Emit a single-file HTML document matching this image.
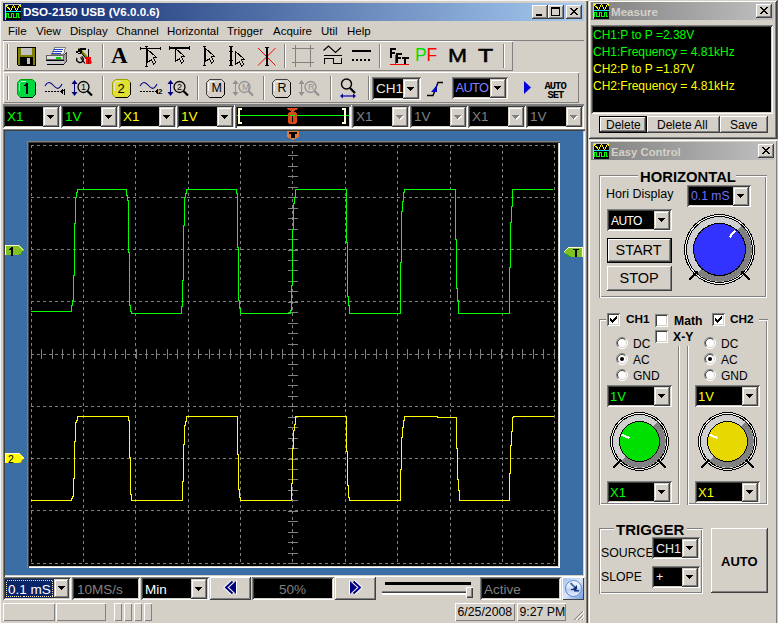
<!DOCTYPE html>
<html><head><meta charset="utf-8">
<style>
*{box-sizing:border-box}
html,body{margin:0;padding:0}
body{width:778px;height:623px;background:#D4D0C8;position:relative;overflow:hidden;font-family:"Liberation Sans",sans-serif;font-size:12px;color:#000}
.a{position:absolute}
.t{position:absolute;white-space:nowrap;line-height:1}
svg{display:block;overflow:visible}
</style></head><body>

<div class="a" style="left:0px;top:0px;width:588px;height:660px;background:#D4D0C8;box-shadow:inset 1px 1px #F4F4F4,inset -1px -1px #404040,inset -2px -2px #808080"></div>
<div class="a" style="left:3px;top:3px;width:581px;height:18px;background:linear-gradient(to right,#0A246A,#A6CAF0)"></div>
<svg class="a" style="left:5px;top:4px;" width="16" height="16" viewBox="0 0 16 16" shape-rendering="crispEdges"><rect x="0" y="0" width="16" height="16" fill="#000"/><rect x="0" y="0" width="16" height="1" fill="#C8C8C8"/><rect x="0" y="0" width="1" height="16" fill="#C8C8C8"/><rect x="1" y="1" width="1" height="2" fill="#FFFF00"/><rect x="2" y="1" width="1" height="1" fill="#FFFF00"/><rect x="2" y="3" width="1" height="1" fill="#FFFF00"/><rect x="3" y="4" width="1" height="1" fill="#FFFF00"/><rect x="3" y="3" width="1" height="1" fill="#FFFF00"/><rect x="4" y="5" width="1" height="1" fill="#FFFF00"/><rect x="4" y="4" width="1" height="1" fill="#FFFF00"/><rect x="5" y="6" width="1" height="1" fill="#FFFF00"/><rect x="6" y="5" width="1" height="1" fill="#FFFF00"/><rect x="6" y="4" width="1" height="1" fill="#FFFF00"/><rect x="7" y="3" width="1" height="1" fill="#FFFF00"/><rect x="7" y="2" width="1" height="1" fill="#FFFF00"/><rect x="8" y="1" width="1" height="1" fill="#FFFF00"/><rect x="9" y="2" width="1" height="1" fill="#FFFF00"/><rect x="9" y="3" width="1" height="1" fill="#FFFF00"/><rect x="10" y="4" width="1" height="1" fill="#FFFF00"/><rect x="10" y="5" width="1" height="1" fill="#FFFF00"/><rect x="11" y="6" width="1" height="1" fill="#FFFF00"/><rect x="12" y="5" width="1" height="1" fill="#FFFF00"/><rect x="12" y="4" width="1" height="1" fill="#FFFF00"/><rect x="13" y="3" width="1" height="1" fill="#FFFF00"/><rect x="13" y="2" width="1" height="1" fill="#FFFF00"/><rect x="14" y="1" width="1" height="1" fill="#FFFF00"/><rect x="15" y="1" width="1" height="2" fill="#FFFF00"/><rect x="1" y="7" width="15" height="1" fill="#00E8FF"/><rect x="1" y="9" width="1" height="5" fill="#00FF00"/><rect x="1" y="9" width="2" height="1" fill="#00FF00"/><rect x="3" y="9" width="1" height="5" fill="#00FF00"/><rect x="3" y="13" width="3" height="1" fill="#00FF00"/><rect x="6" y="9" width="1" height="5" fill="#00FF00"/><rect x="6" y="9" width="3" height="1" fill="#00FF00"/><rect x="8" y="9" width="1" height="5" fill="#00FF00"/><rect x="8" y="13" width="3" height="1" fill="#00FF00"/><rect x="11" y="9" width="1" height="5" fill="#00FF00"/><rect x="11" y="9" width="3" height="1" fill="#00FF00"/><rect x="13" y="9" width="1" height="5" fill="#00FF00"/><rect x="13" y="13" width="2" height="1" fill="#00FF00"/></svg>
<div class="t" style="left:23px;top:6px;font-size:11.6px;color:#fff;font-weight:bold;">DSO-2150 USB (V6.0.0.6)</div>
<div class="a" style="left:532px;top:5px;width:16px;height:14px;box-shadow:inset -1px -1px #404040,inset 1px 1px #FFFFFF,inset -2px -2px #808080,inset 2px 2px #D4D0C8;background:#D4D0C8"></div>
<div class="a" style="left:548px;top:5px;width:16px;height:14px;box-shadow:inset -1px -1px #404040,inset 1px 1px #FFFFFF,inset -2px -2px #808080,inset 2px 2px #D4D0C8;background:#D4D0C8"></div>
<div class="a" style="left:566px;top:5px;width:16px;height:14px;box-shadow:inset -1px -1px #404040,inset 1px 1px #FFFFFF,inset -2px -2px #808080,inset 2px 2px #D4D0C8;background:#D4D0C8"></div>
<svg class="a" style="left:532px;top:5px;" width="16" height="14" viewBox="0 0 16 14" shape-rendering="crispEdges"><rect x="4" y="9" width="6" height="2" fill="#000"/></svg>
<svg class="a" style="left:548px;top:5px;" width="16" height="14" viewBox="0 0 16 14" shape-rendering="crispEdges"><rect x="3" y="2" width="9" height="2" fill="#000"/><rect x="3" y="2" width="1" height="9" fill="#000"/><rect x="11" y="2" width="1" height="9" fill="#000"/><rect x="3" y="10" width="9" height="1" fill="#000"/></svg>
<svg class="a" style="left:566px;top:5px;" width="16" height="14" viewBox="0 0 16 14" shape-rendering="crispEdges"><rect x="4" y="3" width="2" height="1" fill="#000"/><rect x="10" y="3" width="2" height="1" fill="#000"/><rect x="5" y="4" width="2" height="1" fill="#000"/><rect x="9" y="4" width="2" height="1" fill="#000"/><rect x="6" y="5" width="4" height="1" fill="#000"/><rect x="7" y="6" width="2" height="1" fill="#000"/><rect x="6" y="7" width="4" height="1" fill="#000"/><rect x="5" y="8" width="2" height="1" fill="#000"/><rect x="9" y="8" width="2" height="1" fill="#000"/><rect x="4" y="9" width="2" height="1" fill="#000"/><rect x="10" y="9" width="2" height="1" fill="#000"/></svg>
<div class="t" style="left:8px;top:26px;font-size:11.5px;color:#000;">File</div>
<div class="t" style="left:36px;top:26px;font-size:11.5px;color:#000;">View</div>
<div class="t" style="left:70px;top:26px;font-size:11.5px;color:#000;">Display</div>
<div class="t" style="left:116px;top:26px;font-size:11.5px;color:#000;">Channel</div>
<div class="t" style="left:167px;top:26px;font-size:11.5px;color:#000;">Horizontal</div>
<div class="t" style="left:227px;top:26px;font-size:11.5px;color:#000;">Trigger</div>
<div class="t" style="left:273px;top:26px;font-size:11.5px;color:#000;">Acquire</div>
<div class="t" style="left:321px;top:26px;font-size:11.5px;color:#000;">Util</div>
<div class="t" style="left:347px;top:26px;font-size:11.5px;color:#000;">Help</div>
<div class="a" style="left:3px;top:40px;width:581px;height:1px;background:#808080"></div>
<div class="a" style="left:3px;top:41px;width:510px;height:30px;box-shadow:inset 1px 1px #FFFFFF,inset -1px -1px #808080"></div>
<div class="a" style="left:3px;top:72px;width:576px;height:31px;box-shadow:inset 1px 1px #FFFFFF,inset -1px -1px #808080"></div>
<div class="a" style="left:7px;top:44px;width:2px;height:24px;box-shadow:inset 1px 0 #808080,inset -1px 0 #fff"></div>
<div class="a" style="left:7px;top:76px;width:2px;height:24px;box-shadow:inset 1px 0 #808080,inset -1px 0 #fff"></div>
<div class="a" style="left:102px;top:44px;width:2px;height:24px;box-shadow:inset 1px 0 #808080,inset -1px 0 #fff"></div>
<div class="a" style="left:284px;top:44px;width:2px;height:24px;box-shadow:inset 1px 0 #808080,inset -1px 0 #fff"></div>
<div class="a" style="left:379px;top:44px;width:2px;height:24px;box-shadow:inset 1px 0 #808080,inset -1px 0 #fff"></div>
<div class="a" style="left:503px;top:44px;width:2px;height:24px;box-shadow:inset 1px 0 #808080,inset -1px 0 #fff"></div>
<div class="a" style="left:102px;top:76px;width:2px;height:24px;box-shadow:inset 1px 0 #808080,inset -1px 0 #fff"></div>
<div class="a" style="left:197px;top:76px;width:2px;height:24px;box-shadow:inset 1px 0 #808080,inset -1px 0 #fff"></div>
<div class="a" style="left:263px;top:76px;width:2px;height:24px;box-shadow:inset 1px 0 #808080,inset -1px 0 #fff"></div>
<div class="a" style="left:330px;top:76px;width:2px;height:24px;box-shadow:inset 1px 0 #808080,inset -1px 0 #fff"></div>
<div class="a" style="left:368px;top:76px;width:2px;height:24px;box-shadow:inset 1px 0 #808080,inset -1px 0 #fff"></div>
<svg class="a" style="left:0px;top:0px;" width="1" height="1" viewBox="0 0 1 1" shape-rendering="crispEdges"><rect x="17" y="47" width="19" height="19" fill="#000"/><rect x="18" y="48" width="17" height="17" fill="#808000"/><rect x="21" y="48" width="11" height="7" fill="#C0C0C0"/><rect x="20" y="55" width="13" height="1" fill="#808000"/><rect x="20" y="57" width="13" height="8" fill="#000"/><rect x="27" y="58" width="3" height="6" fill="#C0C0C0"/><rect x="17" y="65" width="1" height="1" fill="#D4D0C8"/></svg>
<svg class="a" style="left:0px;top:0px;" width="1" height="1" viewBox="0 0 1 1" shape-rendering="crispEdges"><path d="M51.5 54.5 L54.5 47.5 L65.5 47.5 L63.5 54.5 Z" fill="#F0F0F0" stroke="#808080"/><rect x="54" y="49" width="9" height="1" fill="#2040D0"/><rect x="53" y="51" width="9" height="1" fill="#2040D0"/><rect x="52" y="53" width="9" height="1" fill="#2040D0"/><rect x="46.5" y="55.5" width="17" height="4" fill="#E0E0E0" stroke="#606060"/><rect x="46" y="60" width="18" height="1" fill="#000"/><rect x="47" y="61" width="17" height="3" fill="#C8C8C8"/><rect x="47" y="64" width="17" height="1" fill="#000"/><rect x="56" y="57" width="5" height="2" fill="#00D000"/><path d="M63.5 55.5 L66.5 52.5 L66.5 61.5 L63.5 64.5" fill="#A0A0A0" stroke="#404040"/></svg>
<svg class="a" style="left:0px;top:0px;" width="1" height="1" viewBox="0 0 1 1" shape-rendering="crispEdges"><path d="M79 48.5 L91.5 63" stroke="#808000" stroke-width="2.4" fill="none" shape-rendering="auto"/><path d="M81.5 53 L90 63.5" stroke="#000" stroke-width="1" fill="none" shape-rendering="auto"/><rect x="80" y="48" width="6" height="2" fill="#000"/><rect x="78" y="49" width="4" height="2" fill="#000"/><rect x="76" y="51" width="5" height="1" fill="#000"/><rect x="76" y="52" width="2" height="1" fill="#000"/><rect x="78" y="53" width="3" height="1" fill="#000"/><rect x="80" y="51" width="2" height="2" fill="#000"/><rect x="78" y="48" width="2" height="1" fill="#808000"/><path d="M77 58 A3.2 3.2 0 1 0 81.5 56.5" stroke="#000" stroke-width="1.3" fill="none" shape-rendering="auto"/><path d="M80.5 57.5 L85 63.5" stroke="#000" stroke-width="1.2" fill="none" shape-rendering="auto"/><rect x="88" y="49" width="1" height="8" fill="#000"/><rect x="86" y="57" width="5" height="7" fill="#FF0000"/><rect x="88" y="59" width="1" height="5" fill="#A00000"/></svg>
<div class="t" style="left:111px;top:44px;font-size:23px;color:#000;font-weight:bold;font-family:'Liberation Serif',serif">A</div>
<svg class="a" style="left:0px;top:0px;" width="1" height="1" viewBox="0 0 1 1" shape-rendering="crispEdges"><rect x="140" y="48" width="21" height="1" fill="#000"/><rect x="140" y="47" width="1" height="3" fill="#000"/><rect x="160" y="47" width="1" height="3" fill="#000"/><rect x="146" y="46" width="1" height="21" fill="#000"/><rect x="145" y="46" width="3" height="1" fill="#000"/><rect x="145" y="66" width="3" height="1" fill="#000"/><path d="M147.5 49.5 L156.5 57.5 L153.5 57.5 L155.5 62.5 L153.5 64 L151.5 60 L147.5 62 Z" fill="#D4D0C8" stroke="#000" stroke-width="1" shape-rendering="crispEdges"/><rect x="169" y="47" width="21" height="2" fill="#000"/><rect x="169" y="46" width="1" height="4" fill="#000"/><rect x="189" y="46" width="1" height="4" fill="#000"/><path d="M175.5 48.5 L184.5 56.5 L181.5 56.5 L183.5 61.5 L181.5 63 L179.5 59 L175.5 61 Z" fill="#D4D0C8" stroke="#000" stroke-width="1" shape-rendering="crispEdges"/><rect x="175" y="48" width="1" height="13" fill="#000"/><rect x="204" y="46" width="1" height="20" fill="#000"/><rect x="203" y="46" width="3" height="1" fill="#000"/><rect x="203" y="65" width="3" height="1" fill="#000"/><path d="M205.5 48.5 L214.5 56.5 L211.5 56.5 L213.5 61.5 L211.5 63 L209.5 59 L205.5 61 Z" fill="#D4D0C8" stroke="#000" stroke-width="1" shape-rendering="crispEdges"/><rect x="230" y="46" width="2" height="20" fill="#000"/><rect x="229" y="46" width="4" height="1" fill="#000"/><rect x="229" y="65" width="4" height="1" fill="#000"/><rect x="229" y="51" width="4" height="1" fill="#000"/><rect x="229" y="60" width="4" height="1" fill="#000"/><path d="M235.5 51.5 L244.5 59.5 L241.5 59.5 L243.5 64.5 L241.5 66 L239.5 62 L235.5 64 Z" fill="#D4D0C8" stroke="#000" stroke-width="1" shape-rendering="crispEdges"/><path d="M258 48 L275.5 65.5 M275.5 48 L258 65.5" stroke="#FF0000" stroke-width="1" shape-rendering="auto"/><rect x="266" y="47" width="2" height="19" fill="#000"/><rect x="265" y="47" width="4" height="1" fill="#000"/><rect x="265" y="65" width="4" height="1" fill="#000"/></svg>
<svg class="a" style="left:0px;top:0px;" width="1" height="1" viewBox="0 0 1 1" shape-rendering="crispEdges"><rect x="295" y="45" width="1" height="22" fill="#808080"/><rect x="310" y="45" width="1" height="22" fill="#808080"/><rect x="292" y="48" width="22" height="1" fill="#808080"/><rect x="292" y="62" width="22" height="1" fill="#808080"/><path d="M323.5 50.5 L328.5 46 L335.5 52.5 L341 47.5" stroke="#000" fill="none" stroke-width="1.2" shape-rendering="auto"/><rect x="324" y="55" width="18" height="1" fill="#000"/><rect x="324" y="58" width="1" height="6" fill="#000"/><rect x="324" y="58" width="10" height="1" fill="#000"/><rect x="333" y="58" width="1" height="6" fill="#000"/><rect x="333" y="63" width="9" height="1" fill="#000"/><rect x="341" y="58" width="1" height="6" fill="#000"/><rect x="352" y="50" width="19" height="2" fill="#000"/><rect x="352" y="59" width="2" height="2" fill="#000"/><rect x="356" y="59" width="2" height="2" fill="#000"/><rect x="360" y="59" width="2" height="2" fill="#000"/><rect x="364" y="59" width="2" height="2" fill="#000"/><rect x="368" y="59" width="2" height="2" fill="#000"/></svg>
<svg class="a" style="left:0px;top:0px;" width="1" height="1" viewBox="0 0 1 1" shape-rendering="crispEdges"><rect x="390" y="48" width="2" height="10" fill="#000"/><rect x="390" y="48" width="6" height="2" fill="#000"/><rect x="390" y="52" width="5" height="2" fill="#000"/><rect x="396" y="53" width="2" height="10" fill="#000"/><rect x="396" y="53" width="6" height="2" fill="#000"/><rect x="396" y="57" width="5" height="2" fill="#000"/><rect x="402" y="57" width="7" height="2" fill="#000"/><rect x="404" y="57" width="2" height="7" fill="#000"/><rect x="395" y="55" width="1" height="10" fill="#FF0000"/><rect x="390" y="64" width="19" height="1" fill="#FF0000"/></svg>
<div class="t" style="left:415px;top:47px;font-size:17.5px;color:#00E000;">P</div>
<div class="t" style="left:426.5px;top:47px;font-size:17.5px;color:#FF0000;">F</div>
<div class="t" style="left:447.5px;top:46px;font-size:19px;color:#000;transform:scaleX(1.2);transform-origin:0 0;-webkit-text-stroke:0.5px #000">M</div>
<div class="t" style="left:477.5px;top:46px;font-size:19px;color:#000;transform:scaleX(1.3);transform-origin:0 0;-webkit-text-stroke:0.6px #000">T</div>
<svg class="a" style="left:0px;top:0px;" width="1" height="1" viewBox="0 0 1 1"><path d="M20.5 79.5 H32.5 L35.5 82.5 V94.5 L32.5 97.5 H20.5 L17.5 94.5 V82.5 Z" fill="#00D840" stroke="#00A000"/><path d="M35.5 82.5 V94.5 L32.5 97.5 H20.5" fill="none" stroke="#000"/><path d="M19.5 91 V83 L21 81.5 H26" fill="none" stroke="#C8F0D0"/></svg>
<svg class="a" style="left:0px;top:0px;" width="1" height="1" viewBox="0 0 1 1" shape-rendering="crispEdges"><rect x="26" y="83" width="2" height="11" fill="#000"/><rect x="25" y="84" width="1" height="2" fill="#000"/><rect x="24" y="85" width="1" height="1" fill="#000"/></svg>
<svg class="a" style="left:0px;top:0px;" width="1" height="1" viewBox="0 0 1 1"><path d="M115.5 79.5 H127.5 L130.5 82.5 V94.5 L127.5 97.5 H115.5 L112.5 94.5 V82.5 Z" fill="#E0E030" stroke="#A0A000"/><path d="M130.5 82.5 V94.5 L127.5 97.5 H115.5" fill="none" stroke="#000"/><path d="M114.5 91 V83 L116 81.5 H121" fill="none" stroke="#E0E0F0"/></svg>
<div class="t" style="left:117.5px;top:82px;font-size:13px;color:#000;">2</div>
<svg class="a" style="left:0px;top:0px;" width="1" height="1" viewBox="0 0 1 1"><path d="M209.5 79.5 H221.5 L224.5 82.5 V94.5 L221.5 97.5 H209.5 L206.5 94.5 V82.5 Z" fill="#D4D0C8" stroke="#404040"/><path d="M224.5 82.5 V94.5 L221.5 97.5 H209.5" fill="none" stroke="#000"/><path d="M208.5 91 V83 L210 81.5 H215" fill="none" stroke="#FFFFFF"/></svg>
<div class="t" style="left:211.5px;top:82px;font-size:12.5px;color:#000;">M</div>
<svg class="a" style="left:0px;top:0px;" width="1" height="1" viewBox="0 0 1 1"><path d="M275.5 79.5 H287.5 L290.5 82.5 V94.5 L287.5 97.5 H275.5 L272.5 94.5 V82.5 Z" fill="#D4D0C8" stroke="#404040"/><path d="M290.5 82.5 V94.5 L287.5 97.5 H275.5" fill="none" stroke="#000"/><path d="M274.5 91 V83 L276 81.5 H281" fill="none" stroke="#FFFFFF"/></svg>
<div class="t" style="left:277.5px;top:82px;font-size:12.5px;color:#000;">R</div>
<svg class="a" style="left:0px;top:0px;" width="1" height="1" viewBox="0 0 1 1"><path d="M45 86 C47.5 81.5 50 81.5 53.5 85.5 S59 89.5 62 84" stroke="#000080" fill="none" stroke-width="1.1" shape-rendering="auto"/><rect x="45" y="91" width="2" height="1" fill="#000"/><rect x="48" y="91" width="2" height="1" fill="#000"/><rect x="51" y="91" width="2" height="1" fill="#000"/><rect x="54" y="91" width="2" height="1" fill="#000"/><rect x="57" y="91" width="2" height="1" fill="#000"/><rect x="60" y="91" width="1" height="1" fill="#000"/><rect x="61" y="90" width="1" height="3" fill="#000"/><rect x="62" y="89" width="1" height="5" fill="#000"/></svg>
<svg class="a" style="left:0px;top:0px;" width="1" height="1" viewBox="0 0 1 1" shape-rendering="crispEdges"><rect x="64" y="89" width="1" height="6" fill="#000"/><rect x="63" y="90" width="1" height="1" fill="#000"/></svg>
<svg class="a" style="left:0px;top:0px;" width="1" height="1" viewBox="0 0 1 1"><path d="M140 86 C142.5 81.5 145 81.5 148.5 85.5 S154 89.5 157 84" stroke="#000080" fill="none" stroke-width="1.1" shape-rendering="auto"/><rect x="140" y="91" width="2" height="1" fill="#000"/><rect x="143" y="91" width="2" height="1" fill="#000"/><rect x="146" y="91" width="2" height="1" fill="#000"/><rect x="149" y="91" width="2" height="1" fill="#000"/><rect x="152" y="91" width="2" height="1" fill="#000"/><rect x="155" y="91" width="1" height="1" fill="#000"/><rect x="156" y="90" width="1" height="3" fill="#000"/><rect x="157" y="89" width="1" height="5" fill="#000"/></svg>
<div class="t" style="left:158px;top:88px;font-size:8px;color:#000;font-weight:bold;">2</div>
<svg class="a" style="left:0px;top:0px;" width="1" height="1" viewBox="0 0 1 1"><rect x="74" y="82" width="1" height="12" fill="#000080"/><path d="M71.5 84 L74.5 80 L77.5 84 Z M71.5 92 L74.5 96 L77.5 92 Z" fill="#000080"/><circle cx="83.5" cy="87" r="5.5" fill="none" stroke="#000" stroke-width="1.3"/><path d="M87.5 91 L92 95.5" stroke="#000" stroke-width="2.2"/></svg>
<div class="t" style="left:81px;top:82.5px;font-size:9px;color:#000;">1</div>
<svg class="a" style="left:0px;top:0px;" width="1" height="1" viewBox="0 0 1 1"><rect x="170" y="82" width="1" height="12" fill="#000080"/><path d="M167.5 84 L170.5 80 L173.5 84 Z M167.5 92 L170.5 96 L173.5 92 Z" fill="#000080"/><circle cx="179.5" cy="87" r="5.5" fill="none" stroke="#000" stroke-width="1.3"/><path d="M183.5 91 L188 95.5" stroke="#000" stroke-width="2.2"/></svg>
<div class="t" style="left:177px;top:82.5px;font-size:9px;color:#000;">2</div>
<svg class="a" style="left:0px;top:0px;" width="1" height="1" viewBox="0 0 1 1"><rect x="235" y="82" width="1" height="12" fill="#909090"/><path d="M232.5 84 L235.5 80 L238.5 84 Z M232.5 92 L235.5 96 L238.5 92 Z" fill="#909090"/><circle cx="244.5" cy="87" r="5.5" fill="none" stroke="#909090" stroke-width="1.3"/><path d="M248.5 91 L253 95.5" stroke="#909090" stroke-width="2.2"/></svg>
<div class="t" style="left:242px;top:82.5px;font-size:9px;color:#909090;">M</div>
<svg class="a" style="left:0px;top:0px;" width="1" height="1" viewBox="0 0 1 1"><rect x="301" y="82" width="1" height="12" fill="#909090"/><path d="M298.5 84 L301.5 80 L304.5 84 Z M298.5 92 L301.5 96 L304.5 92 Z" fill="#909090"/><circle cx="310.5" cy="87" r="5.5" fill="none" stroke="#909090" stroke-width="1.3"/><path d="M314.5 91 L319 95.5" stroke="#909090" stroke-width="2.2"/></svg>
<div class="t" style="left:308px;top:82.5px;font-size:9px;color:#909090;">R</div>
<svg class="a" style="left:0px;top:0px;" width="1" height="1" viewBox="0 0 1 1"><circle cx="346.5" cy="84" r="5" fill="none" stroke="#000" stroke-width="1.4"/><path d="M350 88 L355 93" stroke="#000" stroke-width="2.2"/><path d="M341 96 L355 96" stroke="#0000A0" stroke-width="1.2"/><path d="M340 96 L343 93.5 L343 98.5 Z M356 96 L353 93.5 L353 98.5 Z" fill="#0000A0"/></svg>
<div class="a" style="left:372px;top:77px;width:49px;height:23px;box-shadow:inset 1px 1px #808080,inset -1px -1px #FFFFFF,inset 2px 2px #404040,inset -2px -2px #D4D0C8;background:#000"></div>
<div class="a" style="left:403px;top:79px;width:16px;height:20px;box-shadow:inset -1px -1px #404040,inset 1px 1px #D4D0C8,inset -2px -2px #808080,inset 2px 2px #FFFFFF;background:#D4D0C8"></div>
<svg class="a" style="left:407px;top:87px;" width="7" height="4" viewBox="0 0 7 4" shape-rendering="crispEdges"><path d="M0 0h7v1h-1v1h-1v1h-1v1h-1v-1h-1v-1h-1v-1h-1z" fill="#000"/></svg>
<div class="t" style="left:376px;top:82px;font-size:13.5px;color:#E8E8D8;">CH1</div>
<svg class="a" style="left:0px;top:0px;" width="1" height="1" viewBox="0 0 1 1"><path d="M427 95.5 H433 L438 82.5 H443" stroke="#000" fill="none" stroke-width="1.4"/><path d="M431 92 L437 85 L437 92 Z" fill="#0000C0"/></svg>
<div class="a" style="left:452px;top:77px;width:56px;height:22px;box-shadow:inset 1px 1px #808080,inset -1px -1px #FFFFFF,inset 2px 2px #404040,inset -2px -2px #D4D0C8;background:#000"></div>
<div class="a" style="left:490px;top:79px;width:16px;height:19px;box-shadow:inset -1px -1px #404040,inset 1px 1px #D4D0C8,inset -2px -2px #808080,inset 2px 2px #FFFFFF;background:#D4D0C8"></div>
<svg class="a" style="left:494px;top:86px;" width="7" height="4" viewBox="0 0 7 4" shape-rendering="crispEdges"><path d="M0 0h7v1h-1v1h-1v1h-1v1h-1v-1h-1v-1h-1v-1h-1z" fill="#000"/></svg>
<div class="t" style="left:455.5px;top:81.5px;font-size:12.8px;color:#8080FF;letter-spacing:-0.6px">AUTO</div>
<svg class="a" style="left:0px;top:0px;" width="1" height="1" viewBox="0 0 1 1"><path d="M524 81 L531 87.5 L524 94 Z" fill="#0000E0"/></svg>
<div class="t" style="left:544.5px;top:80.5px;font-size:10.5px;color:#000;font-weight:bold;font-family:'Liberation Mono',monospace;letter-spacing:-1px">AUTO</div>
<div class="t" style="left:547.5px;top:89.5px;font-size:10.5px;color:#000;font-weight:bold;font-family:'Liberation Mono',monospace;letter-spacing:-1px">SET</div>
<div class="a" style="left:3px;top:104px;width:581px;height:1px;background:#808080"></div>
<div class="a" style="left:3px;top:105px;width:581px;height:1px;background:#FFFFFF"></div>
<div class="a" style="left:3px;top:105px;width:58px;height:23px;box-shadow:inset 1px 1px #808080,inset -1px -1px #FFFFFF,inset 2px 2px #404040,inset -2px -2px #D4D0C8;background:#000"></div>
<div class="a" style="left:43px;top:107px;width:16px;height:20px;box-shadow:inset -1px -1px #404040,inset 1px 1px #D4D0C8,inset -2px -2px #808080,inset 2px 2px #FFFFFF;background:#D4D0C8"></div>
<svg class="a" style="left:47px;top:115px;" width="7" height="4" viewBox="0 0 7 4" shape-rendering="crispEdges"><path d="M0 0h7v1h-1v1h-1v1h-1v1h-1v-1h-1v-1h-1v-1h-1z" fill="#000"/></svg>
<div class="t" style="left:7px;top:110.25px;font-size:13.5px;color:#00FF00;">X1</div>
<div class="a" style="left:61px;top:105px;width:58px;height:23px;box-shadow:inset 1px 1px #808080,inset -1px -1px #FFFFFF,inset 2px 2px #404040,inset -2px -2px #D4D0C8;background:#000"></div>
<div class="a" style="left:101px;top:107px;width:16px;height:20px;box-shadow:inset -1px -1px #404040,inset 1px 1px #D4D0C8,inset -2px -2px #808080,inset 2px 2px #FFFFFF;background:#D4D0C8"></div>
<svg class="a" style="left:105px;top:115px;" width="7" height="4" viewBox="0 0 7 4" shape-rendering="crispEdges"><path d="M0 0h7v1h-1v1h-1v1h-1v1h-1v-1h-1v-1h-1v-1h-1z" fill="#000"/></svg>
<div class="t" style="left:65px;top:110.25px;font-size:13.5px;color:#00FF00;">1V</div>
<div class="a" style="left:119px;top:105px;width:58px;height:23px;box-shadow:inset 1px 1px #808080,inset -1px -1px #FFFFFF,inset 2px 2px #404040,inset -2px -2px #D4D0C8;background:#000"></div>
<div class="a" style="left:159px;top:107px;width:16px;height:20px;box-shadow:inset -1px -1px #404040,inset 1px 1px #D4D0C8,inset -2px -2px #808080,inset 2px 2px #FFFFFF;background:#D4D0C8"></div>
<svg class="a" style="left:163px;top:115px;" width="7" height="4" viewBox="0 0 7 4" shape-rendering="crispEdges"><path d="M0 0h7v1h-1v1h-1v1h-1v1h-1v-1h-1v-1h-1v-1h-1z" fill="#000"/></svg>
<div class="t" style="left:123px;top:110.25px;font-size:13.5px;color:#FFFF00;">X1</div>
<div class="a" style="left:177px;top:105px;width:58px;height:23px;box-shadow:inset 1px 1px #808080,inset -1px -1px #FFFFFF,inset 2px 2px #404040,inset -2px -2px #D4D0C8;background:#000"></div>
<div class="a" style="left:217px;top:107px;width:16px;height:20px;box-shadow:inset -1px -1px #404040,inset 1px 1px #D4D0C8,inset -2px -2px #808080,inset 2px 2px #FFFFFF;background:#D4D0C8"></div>
<svg class="a" style="left:221px;top:115px;" width="7" height="4" viewBox="0 0 7 4" shape-rendering="crispEdges"><path d="M0 0h7v1h-1v1h-1v1h-1v1h-1v-1h-1v-1h-1v-1h-1z" fill="#000"/></svg>
<div class="t" style="left:181px;top:110.25px;font-size:13.5px;color:#FFFF00;">1V</div>
<div class="a" style="left:352px;top:105px;width:58px;height:23px;box-shadow:inset 1px 1px #808080,inset -1px -1px #FFFFFF,inset 2px 2px #404040,inset -2px -2px #D4D0C8;background:#000"></div>
<div class="a" style="left:392px;top:107px;width:16px;height:20px;box-shadow:inset -1px -1px #404040,inset 1px 1px #D4D0C8,inset -2px -2px #808080,inset 2px 2px #FFFFFF;background:#D4D0C8"></div>
<svg class="a" style="left:397px;top:116px;" width="7" height="4" viewBox="0 0 7 4" shape-rendering="crispEdges"><path d="M0 0h7v1h-1v1h-1v1h-1v1h-1v-1h-1v-1h-1v-1h-1z" fill="#FFFFFF"/></svg>
<svg class="a" style="left:396px;top:115px;" width="7" height="4" viewBox="0 0 7 4" shape-rendering="crispEdges"><path d="M0 0h7v1h-1v1h-1v1h-1v1h-1v-1h-1v-1h-1v-1h-1z" fill="#808080"/></svg>
<div class="t" style="left:356px;top:110.25px;font-size:13.5px;color:#808080;">X1</div>
<div class="a" style="left:410px;top:105px;width:58px;height:23px;box-shadow:inset 1px 1px #808080,inset -1px -1px #FFFFFF,inset 2px 2px #404040,inset -2px -2px #D4D0C8;background:#000"></div>
<div class="a" style="left:450px;top:107px;width:16px;height:20px;box-shadow:inset -1px -1px #404040,inset 1px 1px #D4D0C8,inset -2px -2px #808080,inset 2px 2px #FFFFFF;background:#D4D0C8"></div>
<svg class="a" style="left:455px;top:116px;" width="7" height="4" viewBox="0 0 7 4" shape-rendering="crispEdges"><path d="M0 0h7v1h-1v1h-1v1h-1v1h-1v-1h-1v-1h-1v-1h-1z" fill="#FFFFFF"/></svg>
<svg class="a" style="left:454px;top:115px;" width="7" height="4" viewBox="0 0 7 4" shape-rendering="crispEdges"><path d="M0 0h7v1h-1v1h-1v1h-1v1h-1v-1h-1v-1h-1v-1h-1z" fill="#808080"/></svg>
<div class="t" style="left:414px;top:110.25px;font-size:13.5px;color:#808080;">1V</div>
<div class="a" style="left:468px;top:105px;width:58px;height:23px;box-shadow:inset 1px 1px #808080,inset -1px -1px #FFFFFF,inset 2px 2px #404040,inset -2px -2px #D4D0C8;background:#000"></div>
<div class="a" style="left:508px;top:107px;width:16px;height:20px;box-shadow:inset -1px -1px #404040,inset 1px 1px #D4D0C8,inset -2px -2px #808080,inset 2px 2px #FFFFFF;background:#D4D0C8"></div>
<svg class="a" style="left:513px;top:116px;" width="7" height="4" viewBox="0 0 7 4" shape-rendering="crispEdges"><path d="M0 0h7v1h-1v1h-1v1h-1v1h-1v-1h-1v-1h-1v-1h-1z" fill="#FFFFFF"/></svg>
<svg class="a" style="left:512px;top:115px;" width="7" height="4" viewBox="0 0 7 4" shape-rendering="crispEdges"><path d="M0 0h7v1h-1v1h-1v1h-1v1h-1v-1h-1v-1h-1v-1h-1z" fill="#808080"/></svg>
<div class="t" style="left:472px;top:110.25px;font-size:13.5px;color:#808080;">X1</div>
<div class="a" style="left:526px;top:105px;width:58px;height:23px;box-shadow:inset 1px 1px #808080,inset -1px -1px #FFFFFF,inset 2px 2px #404040,inset -2px -2px #D4D0C8;background:#000"></div>
<div class="a" style="left:566px;top:107px;width:16px;height:20px;box-shadow:inset -1px -1px #404040,inset 1px 1px #D4D0C8,inset -2px -2px #808080,inset 2px 2px #FFFFFF;background:#D4D0C8"></div>
<svg class="a" style="left:571px;top:116px;" width="7" height="4" viewBox="0 0 7 4" shape-rendering="crispEdges"><path d="M0 0h7v1h-1v1h-1v1h-1v1h-1v-1h-1v-1h-1v-1h-1z" fill="#FFFFFF"/></svg>
<svg class="a" style="left:570px;top:115px;" width="7" height="4" viewBox="0 0 7 4" shape-rendering="crispEdges"><path d="M0 0h7v1h-1v1h-1v1h-1v1h-1v-1h-1v-1h-1v-1h-1z" fill="#808080"/></svg>
<div class="t" style="left:530px;top:110.25px;font-size:13.5px;color:#808080;">1V</div>
<div class="a" style="left:234px;top:105px;width:117px;height:23px;box-shadow:inset 1px 1px #808080,inset -1px -1px #FFFFFF,inset 2px 2px #404040,inset -2px -2px #D4D0C8;background:#000;box-shadow:inset 1px 0 #fff,inset 2px 2px #808080,inset 3px 2px #404040,inset -1px -1px #FFFFFF,inset -2px -2px #D4D0C8"></div>
<svg class="a" style="left:0px;top:0px;" width="1" height="1" viewBox="0 0 1 1" shape-rendering="crispEdges"><rect x="237" y="115" width="112" height="1" fill="#00FF00"/><rect x="238" y="108" width="2" height="16" fill="#FFFFD0"/><rect x="238" y="108" width="4" height="2" fill="#FFFFD0"/><rect x="238" y="122" width="4" height="2" fill="#FFFFD0"/><rect x="344" y="108" width="2" height="16" fill="#FFFFD0"/><rect x="342" y="108" width="4" height="2" fill="#FFFFD0"/><rect x="342" y="122" width="4" height="2" fill="#FFFFD0"/><rect x="287" y="108" width="11" height="1" fill="#D84818"/><rect x="288" y="109" width="9" height="1" fill="#D84818"/><rect x="290" y="110" width="5" height="1" fill="#D84818"/><rect x="291" y="111" width="3" height="1" fill="#D84818"/><rect x="289" y="112" width="7" height="1" fill="#D84818"/><rect x="288" y="113" width="9" height="10" fill="#D84818"/><rect x="289" y="123" width="7" height="1" fill="#D84818"/><rect x="292" y="116" width="1" height="6" fill="#000"/><rect x="290" y="115" width="5" height="1" fill="#00FF00"/></svg>
<div class="a" style="left:3px;top:128px;width:581px;height:1px;background:#FFFFFF"></div>
<div class="a" style="left:3px;top:129px;width:582px;height:448px;background:#3A6EA5;box-shadow:inset 1px 1px #808080,inset 2px 2px #404040,inset -1px -1px #FFFFFF,inset -2px -2px #D4D0C8"></div>
<svg class="a" style="left:0px;top:0px;" width="1" height="1" viewBox="0 0 1 1" shape-rendering="crispEdges"><rect x="287" y="131" width="12" height="6" fill="#E07838"/><rect x="288" y="137" width="10" height="1" fill="#E07838"/><rect x="290" y="138" width="6" height="1" fill="#E07838"/><rect x="292" y="139" width="2" height="1" fill="#E07838"/><rect x="289" y="132" width="8" height="2" fill="#000"/><rect x="291" y="134" width="4" height="4" fill="#000"/></svg>
<svg class="a" style="left:0px;top:0px;" width="1" height="1" viewBox="0 0 1 1" shape-rendering="crispEdges"><rect x="5" y="245" width="15" height="10" fill="#80C020"/><rect x="20" y="246" width="1" height="8" fill="#80C020"/><rect x="21" y="247" width="1" height="6" fill="#80C020"/><rect x="22" y="248" width="1" height="4" fill="#80C020"/><rect x="23" y="249" width="1" height="2" fill="#80C020"/><rect x="5" y="245" width="14" height="1" fill="#FFFFD0"/><rect x="5" y="245" width="1" height="10" fill="#FFFFD0"/><rect x="19" y="246" width="1" height="1" fill="#FFFFD0"/><rect x="20" y="247" width="1" height="1" fill="#FFFFD0"/><rect x="21" y="248" width="1" height="1" fill="#FFFFD0"/><rect x="22" y="249" width="1" height="1" fill="#FFFFD0"/><rect x="19" y="254" width="2" height="1" fill="#20A020"/><rect x="21" y="252" width="1" height="2" fill="#20A020"/><rect x="22" y="251" width="1" height="1" fill="#20A020"/></svg>
<svg class="a" style="left:0px;top:0px;" width="1" height="1" viewBox="0 0 1 1" shape-rendering="crispEdges"><rect x="11" y="247" width="2" height="9" fill="#000"/><rect x="10" y="248" width="1" height="2" fill="#000"/><rect x="9" y="249" width="1" height="1" fill="#000"/></svg>
<svg class="a" style="left:0px;top:0px;" width="1" height="1" viewBox="0 0 1 1" shape-rendering="crispEdges"><rect x="5" y="453" width="15" height="10" fill="#FFFF00"/><rect x="20" y="454" width="1" height="8" fill="#FFFF00"/><rect x="21" y="455" width="1" height="6" fill="#FFFF00"/><rect x="22" y="456" width="1" height="4" fill="#FFFF00"/><rect x="23" y="457" width="1" height="2" fill="#FFFF00"/><rect x="5" y="453" width="14" height="1" fill="#FFFFE0"/><rect x="5" y="453" width="1" height="10" fill="#FFFFE0"/><rect x="19" y="454" width="1" height="1" fill="#FFFFE0"/><rect x="20" y="455" width="1" height="1" fill="#FFFFE0"/><rect x="21" y="456" width="1" height="1" fill="#FFFFE0"/><rect x="22" y="457" width="1" height="1" fill="#FFFFE0"/><rect x="19" y="462" width="2" height="1" fill="#F0B000"/><rect x="21" y="460" width="1" height="2" fill="#F0B000"/><rect x="22" y="459" width="1" height="1" fill="#F0B000"/></svg>
<div class="t" style="left:8px;top:454px;font-size:10.5px;color:#000;">2</div>
<svg class="a" style="left:0px;top:0px;" width="1" height="1" viewBox="0 0 1 1" shape-rendering="crispEdges"><rect x="568" y="247" width="15" height="10" fill="#80C020"/><rect x="567" y="248" width="1" height="8" fill="#80C020"/><rect x="566" y="249" width="1" height="6" fill="#80C020"/><rect x="565" y="250" width="1" height="4" fill="#80C020"/><rect x="564" y="251" width="1" height="2" fill="#80C020"/><rect x="568" y="247" width="15" height="1" fill="#FFFFD0"/><rect x="567" y="248" width="1" height="1" fill="#FFFFD0"/><rect x="566" y="249" width="1" height="1" fill="#FFFFD0"/><rect x="565" y="250" width="1" height="1" fill="#FFFFD0"/><rect x="564" y="251" width="1" height="1" fill="#FFFFD0"/><rect x="582" y="247" width="1" height="10" fill="#FFFFD0"/><rect x="566" y="254" width="2" height="1" fill="#20A020"/><rect x="567" y="255" width="2" height="1" fill="#20A020"/><rect x="568" y="256" width="3" height="1" fill="#20A020"/><rect x="573" y="249" width="6" height="1" fill="#000"/><rect x="575" y="249" width="2" height="8" fill="#000"/></svg>
<div class="a" style="left:27px;top:141px;width:533px;height:427px;background:#000;box-shadow:inset 1px 1px #808080,inset 2px 2px #404040,inset -1px -1px #FFFFFF,inset -2px -2px #D4D0C8"></div>
<svg class="a" style="left:0px;top:0px;" width="1" height="1" viewBox="0 0 1 1" shape-rendering="crispEdges"><path d="M31.5 145V564" stroke="#808080" stroke-dasharray="3 3"/><path d="M83.5 145V564" stroke="#808080" stroke-dasharray="3 3"/><path d="M135.5 145V564" stroke="#808080" stroke-dasharray="3 3"/><path d="M188.5 145V564" stroke="#808080" stroke-dasharray="3 3"/><path d="M240.5 145V564" stroke="#808080" stroke-dasharray="3 3"/><path d="M292.5 145V564" stroke="#808080" stroke-dasharray="3 3"/><path d="M345.5 145V564" stroke="#808080" stroke-dasharray="3 3"/><path d="M397.5 145V564" stroke="#808080" stroke-dasharray="3 3"/><path d="M450.5 145V564" stroke="#808080" stroke-dasharray="3 3"/><path d="M502.5 145V564" stroke="#808080" stroke-dasharray="3 3"/><path d="M554.5 145V564" stroke="#808080" stroke-dasharray="3 3"/><path d="M31 145.5H555" stroke="#808080" stroke-dasharray="3 3"/><path d="M31 197.5H555" stroke="#808080" stroke-dasharray="3 3"/><path d="M31 249.5H555" stroke="#808080" stroke-dasharray="3 3"/><path d="M31 301.5H555" stroke="#808080" stroke-dasharray="3 3"/><path d="M31 354.5H555" stroke="#808080" stroke-dasharray="3 3"/><path d="M31 406.5H555" stroke="#808080" stroke-dasharray="3 3"/><path d="M31 458.5H555" stroke="#808080" stroke-dasharray="3 3"/><path d="M31 510.5H555" stroke="#808080" stroke-dasharray="3 3"/><path d="M31 563.5H555" stroke="#808080" stroke-dasharray="3 3"/><rect x="288" y="145" width="10" height="1" fill="#808080"/><rect x="288" y="155" width="10" height="1" fill="#808080"/><rect x="288" y="166" width="10" height="1" fill="#808080"/><rect x="288" y="176" width="10" height="1" fill="#808080"/><rect x="288" y="187" width="10" height="1" fill="#808080"/><rect x="288" y="197" width="10" height="1" fill="#808080"/><rect x="288" y="208" width="10" height="1" fill="#808080"/><rect x="288" y="218" width="10" height="1" fill="#808080"/><rect x="288" y="229" width="10" height="1" fill="#808080"/><rect x="288" y="239" width="10" height="1" fill="#808080"/><rect x="288" y="250" width="10" height="1" fill="#808080"/><rect x="288" y="260" width="10" height="1" fill="#808080"/><rect x="288" y="270" width="10" height="1" fill="#808080"/><rect x="288" y="281" width="10" height="1" fill="#808080"/><rect x="288" y="291" width="10" height="1" fill="#808080"/><rect x="288" y="302" width="10" height="1" fill="#808080"/><rect x="288" y="312" width="10" height="1" fill="#808080"/><rect x="288" y="323" width="10" height="1" fill="#808080"/><rect x="288" y="333" width="10" height="1" fill="#808080"/><rect x="288" y="344" width="10" height="1" fill="#808080"/><rect x="288" y="354" width="10" height="1" fill="#808080"/><rect x="288" y="364" width="10" height="1" fill="#808080"/><rect x="288" y="375" width="10" height="1" fill="#808080"/><rect x="288" y="385" width="10" height="1" fill="#808080"/><rect x="288" y="396" width="10" height="1" fill="#808080"/><rect x="288" y="406" width="10" height="1" fill="#808080"/><rect x="288" y="417" width="10" height="1" fill="#808080"/><rect x="288" y="427" width="10" height="1" fill="#808080"/><rect x="288" y="438" width="10" height="1" fill="#808080"/><rect x="288" y="448" width="10" height="1" fill="#808080"/><rect x="288" y="459" width="10" height="1" fill="#808080"/><rect x="288" y="469" width="10" height="1" fill="#808080"/><rect x="288" y="479" width="10" height="1" fill="#808080"/><rect x="288" y="490" width="10" height="1" fill="#808080"/><rect x="288" y="500" width="10" height="1" fill="#808080"/><rect x="288" y="511" width="10" height="1" fill="#808080"/><rect x="288" y="521" width="10" height="1" fill="#808080"/><rect x="288" y="532" width="10" height="1" fill="#808080"/><rect x="288" y="542" width="10" height="1" fill="#808080"/><rect x="288" y="553" width="10" height="1" fill="#808080"/><rect x="288" y="563" width="10" height="1" fill="#808080"/><rect x="31" y="349" width="1" height="10" fill="#808080"/><rect x="41" y="349" width="1" height="10" fill="#808080"/><rect x="52" y="349" width="1" height="10" fill="#808080"/><rect x="62" y="349" width="1" height="10" fill="#808080"/><rect x="73" y="349" width="1" height="10" fill="#808080"/><rect x="83" y="349" width="1" height="10" fill="#808080"/><rect x="94" y="349" width="1" height="10" fill="#808080"/><rect x="104" y="349" width="1" height="10" fill="#808080"/><rect x="115" y="349" width="1" height="10" fill="#808080"/><rect x="125" y="349" width="1" height="10" fill="#808080"/><rect x="136" y="349" width="1" height="10" fill="#808080"/><rect x="146" y="349" width="1" height="10" fill="#808080"/><rect x="156" y="349" width="1" height="10" fill="#808080"/><rect x="167" y="349" width="1" height="10" fill="#808080"/><rect x="177" y="349" width="1" height="10" fill="#808080"/><rect x="188" y="349" width="1" height="10" fill="#808080"/><rect x="198" y="349" width="1" height="10" fill="#808080"/><rect x="209" y="349" width="1" height="10" fill="#808080"/><rect x="219" y="349" width="1" height="10" fill="#808080"/><rect x="230" y="349" width="1" height="10" fill="#808080"/><rect x="240" y="349" width="1" height="10" fill="#808080"/><rect x="250" y="349" width="1" height="10" fill="#808080"/><rect x="261" y="349" width="1" height="10" fill="#808080"/><rect x="271" y="349" width="1" height="10" fill="#808080"/><rect x="282" y="349" width="1" height="10" fill="#808080"/><rect x="292" y="349" width="1" height="10" fill="#808080"/><rect x="303" y="349" width="1" height="10" fill="#808080"/><rect x="313" y="349" width="1" height="10" fill="#808080"/><rect x="324" y="349" width="1" height="10" fill="#808080"/><rect x="334" y="349" width="1" height="10" fill="#808080"/><rect x="345" y="349" width="1" height="10" fill="#808080"/><rect x="355" y="349" width="1" height="10" fill="#808080"/><rect x="365" y="349" width="1" height="10" fill="#808080"/><rect x="376" y="349" width="1" height="10" fill="#808080"/><rect x="386" y="349" width="1" height="10" fill="#808080"/><rect x="397" y="349" width="1" height="10" fill="#808080"/><rect x="407" y="349" width="1" height="10" fill="#808080"/><rect x="418" y="349" width="1" height="10" fill="#808080"/><rect x="428" y="349" width="1" height="10" fill="#808080"/><rect x="439" y="349" width="1" height="10" fill="#808080"/><rect x="449" y="349" width="1" height="10" fill="#808080"/><rect x="459" y="349" width="1" height="10" fill="#808080"/><rect x="470" y="349" width="1" height="10" fill="#808080"/><rect x="480" y="349" width="1" height="10" fill="#808080"/><rect x="491" y="349" width="1" height="10" fill="#808080"/><rect x="501" y="349" width="1" height="10" fill="#808080"/><rect x="512" y="349" width="1" height="10" fill="#808080"/><rect x="522" y="349" width="1" height="10" fill="#808080"/><rect x="533" y="349" width="1" height="10" fill="#808080"/><rect x="543" y="349" width="1" height="10" fill="#808080"/><rect x="554" y="349" width="1" height="10" fill="#808080"/><rect x="31" y="311" width="40" height="1" fill="#00FF00"/><rect x="71" y="305" width="1" height="7" fill="#00FF00"/><rect x="72" y="300" width="1" height="6" fill="#00FF00"/><rect x="73" y="275" width="1" height="26" fill="#00FF00"/><rect x="74" y="223" width="1" height="53" fill="#00FF00"/><rect x="75" y="197" width="1" height="27" fill="#00FF00"/><rect x="76" y="192" width="1" height="6" fill="#00FF00"/><rect x="77" y="189" width="1" height="4" fill="#00FF00"/><rect x="78" y="189" width="48" height="1" fill="#00FF00"/><rect x="126" y="189" width="1" height="7" fill="#00FF00"/><rect x="127" y="195" width="1" height="6" fill="#00FF00"/><rect x="128" y="200" width="1" height="53" fill="#00FF00"/><rect x="129" y="252" width="1" height="54" fill="#00FF00"/><rect x="130" y="305" width="1" height="7" fill="#00FF00"/><rect x="131" y="311" width="1" height="3" fill="#00FF00"/><rect x="132" y="313" width="49" height="1" fill="#00FF00"/><rect x="181" y="306" width="1" height="8" fill="#00FF00"/><rect x="182" y="280" width="1" height="27" fill="#00FF00"/><rect x="183" y="225" width="1" height="56" fill="#00FF00"/><rect x="184" y="197" width="1" height="29" fill="#00FF00"/><rect x="185" y="193" width="1" height="5" fill="#00FF00"/><rect x="186" y="189" width="1" height="5" fill="#00FF00"/><rect x="187" y="189" width="49" height="1" fill="#00FF00"/><rect x="236" y="189" width="1" height="5" fill="#00FF00"/><rect x="237" y="193" width="1" height="55" fill="#00FF00"/><rect x="238" y="247" width="1" height="54" fill="#00FF00"/><rect x="239" y="300" width="1" height="9" fill="#00FF00"/><rect x="240" y="308" width="1" height="6" fill="#00FF00"/><rect x="241" y="313" width="49" height="1" fill="#00FF00"/><rect x="290" y="310" width="1" height="4" fill="#00FF00"/><rect x="291" y="285" width="1" height="26" fill="#00FF00"/><rect x="292" y="229" width="1" height="57" fill="#00FF00"/><rect x="293" y="203" width="1" height="27" fill="#00FF00"/><rect x="294" y="197" width="1" height="7" fill="#00FF00"/><rect x="295" y="189" width="1" height="9" fill="#00FF00"/><rect x="296" y="189" width="50" height="1" fill="#00FF00"/><rect x="346" y="189" width="1" height="54" fill="#00FF00"/><rect x="347" y="242" width="1" height="55" fill="#00FF00"/><rect x="348" y="296" width="1" height="10" fill="#00FF00"/><rect x="349" y="305" width="1" height="9" fill="#00FF00"/><rect x="350" y="313" width="50" height="1" fill="#00FF00"/><rect x="400" y="262" width="1" height="52" fill="#00FF00"/><rect x="401" y="211" width="1" height="52" fill="#00FF00"/><rect x="402" y="201" width="1" height="11" fill="#00FF00"/><rect x="403" y="192" width="1" height="10" fill="#00FF00"/><rect x="404" y="189" width="1" height="4" fill="#00FF00"/><rect x="405" y="189" width="50" height="1" fill="#00FF00"/><rect x="455" y="189" width="1" height="51" fill="#00FF00"/><rect x="456" y="239" width="1" height="50" fill="#00FF00"/><rect x="457" y="288" width="1" height="13" fill="#00FF00"/><rect x="458" y="300" width="1" height="14" fill="#00FF00"/><rect x="459" y="313" width="50" height="1" fill="#00FF00"/><rect x="509" y="267" width="1" height="47" fill="#00FF00"/><rect x="510" y="222" width="1" height="46" fill="#00FF00"/><rect x="511" y="206" width="1" height="17" fill="#00FF00"/><rect x="512" y="189" width="1" height="18" fill="#00FF00"/><rect x="513" y="189" width="40" height="1" fill="#00FF00"/><rect x="31" y="500" width="40" height="1" fill="#FFFF00"/><rect x="71" y="498" width="1" height="3" fill="#FFFF00"/><rect x="72" y="496" width="1" height="3" fill="#FFFF00"/><rect x="73" y="478" width="1" height="19" fill="#FFFF00"/><rect x="74" y="441" width="1" height="38" fill="#FFFF00"/><rect x="75" y="422" width="1" height="20" fill="#FFFF00"/><rect x="76" y="420" width="1" height="3" fill="#FFFF00"/><rect x="77" y="416" width="1" height="5" fill="#FFFF00"/><rect x="78" y="416" width="50" height="1" fill="#FFFF00"/><rect x="128" y="416" width="1" height="5" fill="#FFFF00"/><rect x="129" y="420" width="1" height="38" fill="#FFFF00"/><rect x="130" y="457" width="1" height="38" fill="#FFFF00"/><rect x="131" y="494" width="1" height="7" fill="#FFFF00"/><rect x="132" y="500" width="50" height="1" fill="#FFFF00"/><rect x="182" y="481" width="1" height="20" fill="#FFFF00"/><rect x="183" y="444" width="1" height="38" fill="#FFFF00"/><rect x="184" y="425" width="1" height="20" fill="#FFFF00"/><rect x="185" y="421" width="1" height="5" fill="#FFFF00"/><rect x="186" y="416" width="1" height="6" fill="#FFFF00"/><rect x="187" y="416" width="50" height="1" fill="#FFFF00"/><rect x="237" y="416" width="1" height="39" fill="#FFFF00"/><rect x="238" y="454" width="1" height="36" fill="#FFFF00"/><rect x="239" y="489" width="1" height="9" fill="#FFFF00"/><rect x="240" y="497" width="1" height="4" fill="#FFFF00"/><rect x="241" y="500" width="50" height="1" fill="#FFFF00"/><rect x="291" y="483" width="1" height="18" fill="#FFFF00"/><rect x="292" y="448" width="1" height="36" fill="#FFFF00"/><rect x="293" y="430" width="1" height="19" fill="#FFFF00"/><rect x="294" y="424" width="1" height="7" fill="#FFFF00"/><rect x="295" y="416" width="1" height="9" fill="#FFFF00"/><rect x="296" y="416" width="50" height="1" fill="#FFFF00"/><rect x="346" y="416" width="1" height="36" fill="#FFFF00"/><rect x="347" y="451" width="1" height="35" fill="#FFFF00"/><rect x="348" y="485" width="1" height="13" fill="#FFFF00"/><rect x="349" y="497" width="1" height="4" fill="#FFFF00"/><rect x="350" y="500" width="50" height="1" fill="#FFFF00"/><rect x="400" y="469" width="1" height="32" fill="#FFFF00"/><rect x="401" y="437" width="1" height="33" fill="#FFFF00"/><rect x="402" y="427" width="1" height="11" fill="#FFFF00"/><rect x="403" y="420" width="1" height="8" fill="#FFFF00"/><rect x="404" y="416" width="1" height="5" fill="#FFFF00"/><rect x="405" y="416" width="32" height="1" fill="#FFFF00"/><rect x="437" y="416" width="1" height="2" fill="#FFFF00"/><rect x="438" y="417" width="18" height="1" fill="#FFFF00"/><rect x="456" y="417" width="1" height="32" fill="#FFFF00"/><rect x="457" y="448" width="1" height="32" fill="#FFFF00"/><rect x="458" y="479" width="1" height="12" fill="#FFFF00"/><rect x="459" y="490" width="1" height="11" fill="#FFFF00"/><rect x="460" y="500" width="49" height="1" fill="#FFFF00"/><rect x="509" y="473" width="1" height="28" fill="#FFFF00"/><rect x="510" y="445" width="1" height="29" fill="#FFFF00"/><rect x="511" y="431" width="1" height="15" fill="#FFFF00"/><rect x="512" y="417" width="1" height="15" fill="#FFFF00"/><rect x="513" y="416" width="1" height="2" fill="#FFFF00"/><rect x="514" y="416" width="40" height="1" fill="#FFFF00"/></svg>
<div class="a" style="left:3px;top:577px;width:68px;height:23px;box-shadow:inset 1px 1px #808080,inset -1px -1px #FFFFFF,inset 2px 2px #404040,inset -2px -2px #D4D0C8;background:#000"></div>
<div class="a" style="left:5px;top:579px;width:49px;height:19px;background:#0A246A"></div>
<svg class="a" style="left:0px;top:0px;" width="1" height="1" viewBox="0 0 1 1" shape-rendering="crispEdges"><rect x="6.5" y="580.5" width="46" height="16" fill="none" stroke="#FFE8A0" stroke-dasharray="1 1"/></svg>
<div class="t" style="left:8px;top:583px;font-size:13.5px;color:#FFFFFF;">0.1 mS</div>
<div class="a" style="left:54px;top:579px;width:15px;height:19px;box-shadow:inset -1px -1px #404040,inset 1px 1px #D4D0C8,inset -2px -2px #808080,inset 2px 2px #FFFFFF;background:#D4D0C8"></div>
<svg class="a" style="left:58px;top:586px;" width="7" height="4" viewBox="0 0 7 4" shape-rendering="crispEdges"><path d="M0 0h7v1h-1v1h-1v1h-1v1h-1v-1h-1v-1h-1v-1h-1z" fill="#000"/></svg>
<div class="a" style="left:72px;top:577px;width:68px;height:23px;box-shadow:inset 1px 1px #808080,inset -1px -1px #FFFFFF,inset 2px 2px #404040,inset -2px -2px #D4D0C8;background:#000"></div>
<div class="t" style="left:77px;top:583px;font-size:13.5px;color:#808080;">10MS/s</div>
<div class="a" style="left:141px;top:577px;width:68px;height:23px;box-shadow:inset 1px 1px #808080,inset -1px -1px #FFFFFF,inset 2px 2px #404040,inset -2px -2px #D4D0C8;background:#000"></div>
<div class="a" style="left:191px;top:579px;width:16px;height:20px;box-shadow:inset -1px -1px #404040,inset 1px 1px #D4D0C8,inset -2px -2px #808080,inset 2px 2px #FFFFFF;background:#D4D0C8"></div>
<svg class="a" style="left:195px;top:587px;" width="7" height="4" viewBox="0 0 7 4" shape-rendering="crispEdges"><path d="M0 0h7v1h-1v1h-1v1h-1v1h-1v-1h-1v-1h-1v-1h-1z" fill="#000"/></svg>
<div class="t" style="left:145px;top:583px;font-size:13.5px;color:#FFFFFF;">Min</div>
<div class="a" style="left:210px;top:577px;width:41px;height:23px;box-shadow:inset -1px -1px #404040,inset 1px 1px #FFFFFF,inset -2px -2px #808080,inset 2px 2px #D4D0C8;background:#D4D0C8"></div>
<svg class="a" style="left:0px;top:0px;" width="1" height="1" viewBox="0 0 1 1"><path d="M232.5 581.5 L226 587.5 L232.5 593.5" stroke="#FFFFFF" stroke-width="4" fill="none"/><path d="M237 580 L228 587.5 L237 595 Z" fill="#FFFFFF"/><path d="M232.5 581.5 L226 587.5 L232.5 593.5" stroke="#000080" stroke-width="2" fill="none"/><path d="M236 581 L229 587.5 L236 594 Z" fill="#000080"/></svg>
<div class="a" style="left:252px;top:577px;width:82px;height:23px;box-shadow:inset 1px 1px #808080,inset -1px -1px #FFFFFF,inset 2px 2px #404040,inset -2px -2px #D4D0C8;background:#000"></div>
<div class="t" style="left:279px;top:583px;font-size:13.5px;color:#808080;">50%</div>
<div class="a" style="left:335px;top:577px;width:41px;height:23px;box-shadow:inset -1px -1px #404040,inset 1px 1px #FFFFFF,inset -2px -2px #808080,inset 2px 2px #D4D0C8;background:#D4D0C8"></div>
<svg class="a" style="left:0px;top:0px;" width="1" height="1" viewBox="0 0 1 1"><path d="M353.5 581.5 L360 587.5 L353.5 593.5" stroke="#FFFFFF" stroke-width="4" fill="none"/><path d="M349 580 L358 587.5 L349 595 Z" fill="#FFFFFF"/><path d="M353.5 581.5 L360 587.5 L353.5 593.5" stroke="#000080" stroke-width="2" fill="none"/><path d="M350 581 L357 587.5 L350 594 Z" fill="#000080"/></svg>
<svg class="a" style="left:0px;top:0px;" width="1" height="1" viewBox="0 0 1 1" shape-rendering="crispEdges"><rect x="385" y="582" width="86" height="3" fill="#000"/><rect x="382" y="591" width="85" height="1" fill="#808080"/><rect x="382" y="592" width="85" height="1" fill="#404040"/><rect x="382" y="593" width="85" height="2" fill="#FFFFFF"/></svg>
<div class="a" style="left:466px;top:587px;width:7px;height:11px;background:#D4D0C8;box-shadow:inset 1px 1px #FFFFFF,inset -1px -1px #404040,inset -2px -2px #808080"></div>
<div class="a" style="left:480px;top:577px;width:81px;height:23px;box-shadow:inset 1px 1px #808080,inset -1px -1px #FFFFFF,inset 2px 2px #404040,inset -2px -2px #D4D0C8;background:#000"></div>
<div class="t" style="left:484px;top:583px;font-size:13.5px;color:#808080;">Active</div>
<div class="a" style="left:562px;top:577px;width:22px;height:23px;background:#D4D0C8;box-shadow:inset 1px 1px #FFFFFF,inset -1px -1px #404040"></div>
<svg class="a" style="left:0px;top:0px;" width="1" height="1" viewBox="0 0 1 1"><defs><linearGradient id="ibg" x1="0" y1="0" x2="1" y2="1"><stop offset="0" stop-color="#A8C4F0"/><stop offset="0.5" stop-color="#D8E4F8"/><stop offset="1" stop-color="#6C9CE0"/></linearGradient><linearGradient id="icg" x1="0" y1="0" x2="0" y2="1"><stop offset="0" stop-color="#F4F8FF"/><stop offset="0.45" stop-color="#DCE6F6"/><stop offset="0.55" stop-color="#B8CCEC"/><stop offset="1" stop-color="#E8F0FF"/></linearGradient></defs><rect x="563" y="578" width="20" height="21" fill="url(#ibg)"/><circle cx="573.5" cy="588.5" r="8" fill="url(#icg)" stroke="#5C86C4" stroke-width="1"/><path d="M570.5 583 L576 588.5" stroke="#4A6AA8" stroke-width="1.8"/><path d="M577 585 L577 589.5 L572.5 589.5 Z" fill="#0A2A78"/><path d="M571 589.5 H576" stroke="#0A2A78" stroke-width="1.2"/><path d="M574 590.8 H579" stroke="#0A2A78" stroke-width="1.4"/></svg>
<div class="a" style="left:3px;top:603px;width:52px;height:18px;box-shadow:inset 1px 1px #FFFFFF,inset -1px -1px #808080"></div>
<div class="a" style="left:56px;top:603px;width:50px;height:18px;box-shadow:inset 1px 1px #FFFFFF,inset -1px -1px #808080"></div>
<div class="a" style="left:114px;top:603px;width:8px;height:18px;box-shadow:inset 1px 1px #FFFFFF,inset -1px -1px #808080"></div>
<div class="a" style="left:124px;top:603px;width:8px;height:18px;box-shadow:inset 1px 1px #FFFFFF,inset -1px -1px #808080"></div>
<div class="a" style="left:134px;top:603px;width:8px;height:18px;box-shadow:inset 1px 1px #FFFFFF,inset -1px -1px #808080"></div>
<div class="a" style="left:144px;top:603px;width:8px;height:18px;box-shadow:inset 1px 1px #FFFFFF,inset -1px -1px #808080"></div>
<div class="a" style="left:455px;top:603px;width:60px;height:18px;box-shadow:inset 1px 1px #FFFFFF,inset -1px -1px #808080"></div>
<div class="t" style="left:457.5px;top:606px;font-size:12.3px;color:#000;">6/25/2008</div>
<div class="a" style="left:517px;top:603px;width:49px;height:18px;box-shadow:inset 1px 1px #FFFFFF,inset -1px -1px #808080"></div>
<div class="t" style="left:519.5px;top:606px;font-size:12.3px;color:#000;">9:27 PM</div>
<svg class="a" style="left:0px;top:0px;" width="1" height="1" viewBox="0 0 1 1" shape-rendering="crispEdges"><rect x="582" y="611" width="1" height="1" fill="#808080"/><rect x="581" y="612" width="1" height="1" fill="#808080"/><rect x="580" y="613" width="1" height="1" fill="#808080"/><rect x="579" y="614" width="1" height="1" fill="#808080"/><rect x="578" y="615" width="1" height="1" fill="#808080"/><rect x="577" y="616" width="1" height="1" fill="#808080"/><rect x="576" y="617" width="1" height="1" fill="#808080"/><rect x="575" y="618" width="1" height="1" fill="#808080"/><rect x="574" y="619" width="1" height="1" fill="#808080"/><rect x="582" y="615" width="1" height="1" fill="#808080"/><rect x="581" y="616" width="1" height="1" fill="#808080"/><rect x="580" y="617" width="1" height="1" fill="#808080"/><rect x="579" y="618" width="1" height="1" fill="#808080"/><rect x="578" y="619" width="1" height="1" fill="#808080"/><rect x="582" y="619" width="1" height="1" fill="#808080"/><rect x="583" y="611" width="1" height="1" fill="#FFFFFF"/><rect x="583" y="612" width="1" height="1" fill="#FFFFFF"/><rect x="582" y="613" width="1" height="1" fill="#FFFFFF"/><rect x="581" y="614" width="1" height="1" fill="#FFFFFF"/><rect x="580" y="615" width="1" height="1" fill="#FFFFFF"/><rect x="579" y="616" width="1" height="1" fill="#FFFFFF"/><rect x="578" y="617" width="1" height="1" fill="#FFFFFF"/><rect x="577" y="618" width="1" height="1" fill="#FFFFFF"/><rect x="576" y="619" width="1" height="1" fill="#FFFFFF"/><rect x="583" y="615" width="1" height="1" fill="#FFFFFF"/><rect x="583" y="616" width="1" height="1" fill="#FFFFFF"/><rect x="582" y="617" width="1" height="1" fill="#FFFFFF"/><rect x="581" y="618" width="1" height="1" fill="#FFFFFF"/><rect x="580" y="619" width="1" height="1" fill="#FFFFFF"/><rect x="583" y="619" width="1" height="1" fill="#FFFFFF"/></svg>
<div class="a" style="left:777px;top:0px;width:1px;height:139px;background:#3A6EA5"></div>
<div class="a" style="left:588px;top:0px;width:189px;height:139px;background:#D4D0C8;box-shadow:inset 1px 1px #D4D0C8,inset -1px -1px #404040,inset 2px 2px #FFFFFF,inset -2px -2px #808080"></div>
<div class="a" style="left:591px;top:2px;width:183px;height:18px;background:linear-gradient(to right,#808080,#C0C0C0)"></div>
<svg class="a" style="left:593px;top:3px;" width="16" height="16" viewBox="0 0 16 16" shape-rendering="crispEdges"><rect x="0" y="0" width="16" height="16" fill="#000"/><rect x="0" y="0" width="16" height="1" fill="#C8C8C8"/><rect x="0" y="0" width="1" height="16" fill="#C8C8C8"/><rect x="1" y="1" width="1" height="2" fill="#FFFF00"/><rect x="2" y="1" width="1" height="1" fill="#FFFF00"/><rect x="2" y="3" width="1" height="1" fill="#FFFF00"/><rect x="3" y="4" width="1" height="1" fill="#FFFF00"/><rect x="3" y="3" width="1" height="1" fill="#FFFF00"/><rect x="4" y="5" width="1" height="1" fill="#FFFF00"/><rect x="4" y="4" width="1" height="1" fill="#FFFF00"/><rect x="5" y="6" width="1" height="1" fill="#FFFF00"/><rect x="6" y="5" width="1" height="1" fill="#FFFF00"/><rect x="6" y="4" width="1" height="1" fill="#FFFF00"/><rect x="7" y="3" width="1" height="1" fill="#FFFF00"/><rect x="7" y="2" width="1" height="1" fill="#FFFF00"/><rect x="8" y="1" width="1" height="1" fill="#FFFF00"/><rect x="9" y="2" width="1" height="1" fill="#FFFF00"/><rect x="9" y="3" width="1" height="1" fill="#FFFF00"/><rect x="10" y="4" width="1" height="1" fill="#FFFF00"/><rect x="10" y="5" width="1" height="1" fill="#FFFF00"/><rect x="11" y="6" width="1" height="1" fill="#FFFF00"/><rect x="12" y="5" width="1" height="1" fill="#FFFF00"/><rect x="12" y="4" width="1" height="1" fill="#FFFF00"/><rect x="13" y="3" width="1" height="1" fill="#FFFF00"/><rect x="13" y="2" width="1" height="1" fill="#FFFF00"/><rect x="14" y="1" width="1" height="1" fill="#FFFF00"/><rect x="15" y="1" width="1" height="2" fill="#FFFF00"/><rect x="1" y="7" width="15" height="1" fill="#00E8FF"/><rect x="1" y="9" width="1" height="5" fill="#00FF00"/><rect x="1" y="9" width="2" height="1" fill="#00FF00"/><rect x="3" y="9" width="1" height="5" fill="#00FF00"/><rect x="3" y="13" width="3" height="1" fill="#00FF00"/><rect x="6" y="9" width="1" height="5" fill="#00FF00"/><rect x="6" y="9" width="3" height="1" fill="#00FF00"/><rect x="8" y="9" width="1" height="5" fill="#00FF00"/><rect x="8" y="13" width="3" height="1" fill="#00FF00"/><rect x="11" y="9" width="1" height="5" fill="#00FF00"/><rect x="11" y="9" width="3" height="1" fill="#00FF00"/><rect x="13" y="9" width="1" height="5" fill="#00FF00"/><rect x="13" y="13" width="2" height="1" fill="#00FF00"/></svg>
<div class="t" style="left:611px;top:6px;font-size:11.6px;color:#D4D0C8;font-weight:bold;">Measure</div>
<div class="a" style="left:756px;top:4px;width:16px;height:14px;box-shadow:inset -1px -1px #404040,inset 1px 1px #FFFFFF,inset -2px -2px #808080,inset 2px 2px #D4D0C8;background:#D4D0C8"></div>
<svg class="a" style="left:756px;top:4px;" width="16" height="14" viewBox="0 0 16 14" shape-rendering="crispEdges"><rect x="4" y="3" width="2" height="1" fill="#000"/><rect x="10" y="3" width="2" height="1" fill="#000"/><rect x="5" y="4" width="2" height="1" fill="#000"/><rect x="9" y="4" width="2" height="1" fill="#000"/><rect x="6" y="5" width="4" height="1" fill="#000"/><rect x="7" y="6" width="2" height="1" fill="#000"/><rect x="6" y="7" width="4" height="1" fill="#000"/><rect x="5" y="8" width="2" height="1" fill="#000"/><rect x="9" y="8" width="2" height="1" fill="#000"/><rect x="4" y="9" width="2" height="1" fill="#000"/><rect x="10" y="9" width="2" height="1" fill="#000"/></svg>
<div class="a" style="left:591px;top:25px;width:182px;height:89px;box-shadow:inset 1px 1px #808080,inset -1px -1px #FFFFFF,inset 2px 2px #404040,inset -2px -2px #D4D0C8;background:#000"></div>
<div class="t" style="left:593px;top:29px;font-size:12px;color:#00FF00;">CH1:P to P =2.38V</div>
<div class="t" style="left:593px;top:46px;font-size:12px;color:#00FF00;">CH1:Frequency = 4.81kHz</div>
<div class="t" style="left:593px;top:63px;font-size:12px;color:#FFFF00;">CH2:P to P =1.87V</div>
<div class="t" style="left:593px;top:80px;font-size:12px;color:#FFFF00;">CH2:Frequency = 4.81kHz</div>
<div class="a" style="left:599px;top:116px;width:48px;height:17px;box-shadow:inset 1px 1px #000,inset -1px -1px #000,inset -2px -2px #404040,inset 2px 2px #FFFFFF,inset -3px -3px #808080;background:#D4D0C8"></div>
<div class="t" style="left:606px;top:119px;font-size:12px;color:#000;">Delete</div>
<div class="a" style="left:647px;top:116px;width:73px;height:17px;box-shadow:inset -1px -1px #404040,inset 1px 1px #FFFFFF,inset -2px -2px #808080,inset 2px 2px #D4D0C8;background:#D4D0C8"></div>
<div class="t" style="left:657px;top:119px;font-size:12px;color:#000;">Delete All</div>
<div class="a" style="left:720px;top:116px;width:48px;height:17px;box-shadow:inset -1px -1px #404040,inset 1px 1px #FFFFFF,inset -2px -2px #808080,inset 2px 2px #D4D0C8;background:#D4D0C8"></div>
<div class="t" style="left:730px;top:119px;font-size:12px;color:#000;">Save</div>
<div class="a" style="left:588px;top:139px;width:190px;height:500px;background:#D4D0C8;box-shadow:inset 1px 1px #D4D0C8,inset -1px -1px #C8C8C8,inset 2px 2px #FFFFFF,inset -2px -2px #808080"></div>
<div class="a" style="left:591px;top:142px;width:183px;height:18px;background:linear-gradient(to right,#808080,#C0C0C0)"></div>
<svg class="a" style="left:593px;top:143px;" width="16" height="16" viewBox="0 0 16 16" shape-rendering="crispEdges"><rect x="0" y="0" width="16" height="16" fill="#000"/><rect x="0" y="0" width="16" height="1" fill="#C8C8C8"/><rect x="0" y="0" width="1" height="16" fill="#C8C8C8"/><rect x="1" y="1" width="1" height="2" fill="#FFFF00"/><rect x="2" y="1" width="1" height="1" fill="#FFFF00"/><rect x="2" y="3" width="1" height="1" fill="#FFFF00"/><rect x="3" y="4" width="1" height="1" fill="#FFFF00"/><rect x="3" y="3" width="1" height="1" fill="#FFFF00"/><rect x="4" y="5" width="1" height="1" fill="#FFFF00"/><rect x="4" y="4" width="1" height="1" fill="#FFFF00"/><rect x="5" y="6" width="1" height="1" fill="#FFFF00"/><rect x="6" y="5" width="1" height="1" fill="#FFFF00"/><rect x="6" y="4" width="1" height="1" fill="#FFFF00"/><rect x="7" y="3" width="1" height="1" fill="#FFFF00"/><rect x="7" y="2" width="1" height="1" fill="#FFFF00"/><rect x="8" y="1" width="1" height="1" fill="#FFFF00"/><rect x="9" y="2" width="1" height="1" fill="#FFFF00"/><rect x="9" y="3" width="1" height="1" fill="#FFFF00"/><rect x="10" y="4" width="1" height="1" fill="#FFFF00"/><rect x="10" y="5" width="1" height="1" fill="#FFFF00"/><rect x="11" y="6" width="1" height="1" fill="#FFFF00"/><rect x="12" y="5" width="1" height="1" fill="#FFFF00"/><rect x="12" y="4" width="1" height="1" fill="#FFFF00"/><rect x="13" y="3" width="1" height="1" fill="#FFFF00"/><rect x="13" y="2" width="1" height="1" fill="#FFFF00"/><rect x="14" y="1" width="1" height="1" fill="#FFFF00"/><rect x="15" y="1" width="1" height="2" fill="#FFFF00"/><rect x="1" y="7" width="15" height="1" fill="#00E8FF"/><rect x="1" y="9" width="1" height="5" fill="#00FF00"/><rect x="1" y="9" width="2" height="1" fill="#00FF00"/><rect x="3" y="9" width="1" height="5" fill="#00FF00"/><rect x="3" y="13" width="3" height="1" fill="#00FF00"/><rect x="6" y="9" width="1" height="5" fill="#00FF00"/><rect x="6" y="9" width="3" height="1" fill="#00FF00"/><rect x="8" y="9" width="1" height="5" fill="#00FF00"/><rect x="8" y="13" width="3" height="1" fill="#00FF00"/><rect x="11" y="9" width="1" height="5" fill="#00FF00"/><rect x="11" y="9" width="3" height="1" fill="#00FF00"/><rect x="13" y="9" width="1" height="5" fill="#00FF00"/><rect x="13" y="13" width="2" height="1" fill="#00FF00"/></svg>
<div class="t" style="left:611px;top:147px;font-size:11.3px;color:#D4D0C8;font-weight:bold;">Easy Control</div>
<div class="a" style="left:758px;top:144px;width:16px;height:14px;box-shadow:inset -1px -1px #404040,inset 1px 1px #FFFFFF,inset -2px -2px #808080,inset 2px 2px #D4D0C8;background:#D4D0C8"></div>
<svg class="a" style="left:758px;top:144px;" width="16" height="14" viewBox="0 0 16 14" shape-rendering="crispEdges"><rect x="4" y="3" width="2" height="1" fill="#000"/><rect x="10" y="3" width="2" height="1" fill="#000"/><rect x="5" y="4" width="2" height="1" fill="#000"/><rect x="9" y="4" width="2" height="1" fill="#000"/><rect x="6" y="5" width="4" height="1" fill="#000"/><rect x="7" y="6" width="2" height="1" fill="#000"/><rect x="6" y="7" width="4" height="1" fill="#000"/><rect x="5" y="8" width="2" height="1" fill="#000"/><rect x="9" y="8" width="2" height="1" fill="#000"/><rect x="4" y="9" width="2" height="1" fill="#000"/><rect x="10" y="9" width="2" height="1" fill="#000"/></svg>
<div class="a" style="left:599px;top:175px;width:168px;height:123px;box-shadow:inset 1px 1px #808080,inset -1px -1px #FFFFFF,inset 2px 2px #FFFFFF,inset -2px -2px #808080"></div>
<div class="a" style="left:638px;top:169px;width:98px;height:12px;background:#D4D0C8"></div>
<div class="t" style="left:640px;top:170px;font-size:14.8px;color:#000;font-weight:bold;">HORIZONTAL</div>
<div class="t" style="left:606px;top:187.5px;font-size:12.5px;color:#000;">Hori Display</div>
<div class="a" style="left:687px;top:185px;width:64px;height:22px;box-shadow:inset 1px 1px #808080,inset -1px -1px #FFFFFF,inset 2px 2px #404040,inset -2px -2px #D4D0C8;background:#000"></div>
<div class="a" style="left:733px;top:187px;width:16px;height:19px;box-shadow:inset -1px -1px #404040,inset 1px 1px #D4D0C8,inset -2px -2px #808080,inset 2px 2px #FFFFFF;background:#D4D0C8"></div>
<svg class="a" style="left:737px;top:194px;" width="7" height="4" viewBox="0 0 7 4" shape-rendering="crispEdges"><path d="M0 0h7v1h-1v1h-1v1h-1v1h-1v-1h-1v-1h-1v-1h-1z" fill="#000"/></svg>
<div class="t" style="left:691px;top:189.5px;font-size:12.2px;color:#7070FF;">0.1 mS</div>
<div class="a" style="left:607px;top:209px;width:65px;height:22px;box-shadow:inset 1px 1px #808080,inset -1px -1px #FFFFFF,inset 2px 2px #404040,inset -2px -2px #D4D0C8;background:#000"></div>
<div class="a" style="left:654px;top:211px;width:16px;height:19px;box-shadow:inset -1px -1px #404040,inset 1px 1px #D4D0C8,inset -2px -2px #808080,inset 2px 2px #FFFFFF;background:#D4D0C8"></div>
<svg class="a" style="left:658px;top:218px;" width="7" height="4" viewBox="0 0 7 4" shape-rendering="crispEdges"><path d="M0 0h7v1h-1v1h-1v1h-1v1h-1v-1h-1v-1h-1v-1h-1z" fill="#000"/></svg>
<div class="t" style="left:611px;top:215px;font-size:12px;color:#FFFFFF;letter-spacing:-0.6px">AUTO</div>
<div class="a" style="left:607px;top:238px;width:65px;height:25px;box-shadow:inset 1px 1px #000,inset -1px -1px #000,inset -2px -2px #404040,inset 2px 2px #FFFFFF,inset -3px -3px #808080;background:#D4D0C8"></div>
<div class="t" style="left:615.5px;top:243px;font-size:14.5px;color:#000;">START</div>
<div class="a" style="left:607px;top:266px;width:65px;height:25px;box-shadow:inset -1px -1px #404040,inset 1px 1px #FFFFFF,inset -2px -2px #808080,inset 2px 2px #D4D0C8;background:#D4D0C8"></div>
<div class="t" style="left:619.5px;top:271px;font-size:14.5px;color:#000;">STOP</div>
<svg class="a" style="left:0px;top:0px;" width="1" height="1" viewBox="0 0 1 1" shape-rendering="crispEdges"><circle cx="719.5" cy="249.5" r="35.5" fill="#000"/><circle cx="719.5" cy="249.5" r="34.5" fill="#F4F4F0"/><circle cx="719.5" cy="249.5" r="33.5" fill="#000"/><circle cx="719.5" cy="249.5" r="32.5" fill="#D0D0D0"/><path d="M741.66 225.73 A32.5 32.5 0 0 1 697.34 273.27 Z" fill="#808080"/><circle cx="719.5" cy="249.5" r="26.5" fill="#000"/><circle cx="719.5" cy="249.5" r="25.5" fill="#3333FF"/><line x1="729.68" y1="237.15" x2="735.08" y2="230.60" stroke="#FFFFFF" stroke-width="2.2"/><line x1="697.58" y1="271.42" x2="689.09" y2="279.91" stroke="#000" stroke-width="1.6"/><line x1="741.42" y1="271.42" x2="749.91" y2="279.91" stroke="#000" stroke-width="1.6"/></svg>
<div class="a" style="left:599px;top:319px;width:81px;height:186px;box-shadow:inset 1px 1px #808080,inset -1px -1px #FFFFFF,inset 2px 2px #FFFFFF,inset -2px -2px #808080"></div>
<div class="a" style="left:687px;top:319px;width:81px;height:186px;box-shadow:inset 1px 1px #808080,inset -1px -1px #FFFFFF,inset 2px 2px #FFFFFF,inset -2px -2px #808080"></div>
<div class="a" style="left:606px;top:312px;width:48px;height:15px;background:#D4D0C8"></div>
<div class="a" style="left:607px;top:313px;width:13px;height:13px;box-shadow:inset 1px 1px #808080,inset -1px -1px #FFFFFF,inset 2px 2px #404040,inset -2px -2px #D4D0C8;background:#fff"></div>
<svg class="a" style="left:607px;top:313px;" width="13" height="13" viewBox="0 0 13 13" shape-rendering="crispEdges"><rect x="3" y="5" width="1" height="3" fill="#000"/><rect x="4" y="6" width="1" height="3" fill="#000"/><rect x="5" y="7" width="1" height="3" fill="#000"/><rect x="6" y="6" width="1" height="3" fill="#000"/><rect x="7" y="5" width="1" height="3" fill="#000"/><rect x="8" y="4" width="1" height="3" fill="#000"/><rect x="9" y="3" width="1" height="3" fill="#000"/></svg>
<div class="t" style="left:626px;top:314px;font-size:11.8px;color:#000;font-weight:bold;">CH1</div>
<div class="a" style="left:654px;top:312px;width:57px;height:34px;background:#D4D0C8"></div>
<div class="a" style="left:655px;top:314px;width:13px;height:13px;box-shadow:inset 1px 1px #808080,inset -1px -1px #FFFFFF,inset 2px 2px #404040,inset -2px -2px #D4D0C8;background:#fff"></div>
<div class="t" style="left:674px;top:315px;font-size:12.2px;color:#000;font-weight:bold;">Math</div>
<div class="a" style="left:655px;top:330px;width:13px;height:13px;box-shadow:inset 1px 1px #808080,inset -1px -1px #FFFFFF,inset 2px 2px #404040,inset -2px -2px #D4D0C8;background:#fff"></div>
<div class="t" style="left:673px;top:331px;font-size:12.2px;color:#000;font-weight:bold;">X-Y</div>
<div class="a" style="left:711px;top:312px;width:48px;height:15px;background:#D4D0C8"></div>
<div class="a" style="left:712px;top:313px;width:13px;height:13px;box-shadow:inset 1px 1px #808080,inset -1px -1px #FFFFFF,inset 2px 2px #404040,inset -2px -2px #D4D0C8;background:#fff"></div>
<svg class="a" style="left:712px;top:313px;" width="13" height="13" viewBox="0 0 13 13" shape-rendering="crispEdges"><rect x="3" y="5" width="1" height="3" fill="#000"/><rect x="4" y="6" width="1" height="3" fill="#000"/><rect x="5" y="7" width="1" height="3" fill="#000"/><rect x="6" y="6" width="1" height="3" fill="#000"/><rect x="7" y="5" width="1" height="3" fill="#000"/><rect x="8" y="4" width="1" height="3" fill="#000"/><rect x="9" y="3" width="1" height="3" fill="#000"/></svg>
<div class="t" style="left:730px;top:314px;font-size:11.8px;color:#000;font-weight:bold;">CH2</div>
<svg class="a" style="left:0px;top:0px;" width="1" height="1" viewBox="0 0 1 1"><circle cx="622" cy="343" r="5.5" fill="#fff"/><path d="M618.1 346.9 A5.5 5.5 0 0 1 625.9 339.1" fill="none" stroke="#808080"/><path d="M618.8 346.2 A4.5 4.5 0 0 1 625.2 339.8" fill="none" stroke="#404040"/><path d="M618.1 346.9 A5.5 5.5 0 0 0 625.9 339.1" fill="none" stroke="#FFFFFF"/><path d="M618.8 346.2 A4.5 4.5 0 0 0 625.2 339.8" fill="none" stroke="#D4D0C8"/></svg>
<div class="t" style="left:633px;top:338px;font-size:12px;color:#000;">DC</div>
<svg class="a" style="left:0px;top:0px;" width="1" height="1" viewBox="0 0 1 1"><circle cx="622" cy="359" r="5.5" fill="#fff"/><path d="M618.1 362.9 A5.5 5.5 0 0 1 625.9 355.1" fill="none" stroke="#808080"/><path d="M618.8 362.2 A4.5 4.5 0 0 1 625.2 355.8" fill="none" stroke="#404040"/><path d="M618.1 362.9 A5.5 5.5 0 0 0 625.9 355.1" fill="none" stroke="#FFFFFF"/><path d="M618.8 362.2 A4.5 4.5 0 0 0 625.2 355.8" fill="none" stroke="#D4D0C8"/><circle cx="622" cy="359" r="2" fill="#000"/></svg>
<div class="t" style="left:633px;top:354px;font-size:12px;color:#000;">AC</div>
<svg class="a" style="left:0px;top:0px;" width="1" height="1" viewBox="0 0 1 1"><circle cx="622" cy="375" r="5.5" fill="#fff"/><path d="M618.1 378.9 A5.5 5.5 0 0 1 625.9 371.1" fill="none" stroke="#808080"/><path d="M618.8 378.2 A4.5 4.5 0 0 1 625.2 371.8" fill="none" stroke="#404040"/><path d="M618.1 378.9 A5.5 5.5 0 0 0 625.9 371.1" fill="none" stroke="#FFFFFF"/><path d="M618.8 378.2 A4.5 4.5 0 0 0 625.2 371.8" fill="none" stroke="#D4D0C8"/></svg>
<div class="t" style="left:633px;top:370px;font-size:12px;color:#000;">GND</div>
<svg class="a" style="left:0px;top:0px;" width="1" height="1" viewBox="0 0 1 1"><circle cx="710" cy="343" r="5.5" fill="#fff"/><path d="M706.1 346.9 A5.5 5.5 0 0 1 713.9 339.1" fill="none" stroke="#808080"/><path d="M706.8 346.2 A4.5 4.5 0 0 1 713.2 339.8" fill="none" stroke="#404040"/><path d="M706.1 346.9 A5.5 5.5 0 0 0 713.9 339.1" fill="none" stroke="#FFFFFF"/><path d="M706.8 346.2 A4.5 4.5 0 0 0 713.2 339.8" fill="none" stroke="#D4D0C8"/></svg>
<div class="t" style="left:721px;top:338px;font-size:12px;color:#000;">DC</div>
<svg class="a" style="left:0px;top:0px;" width="1" height="1" viewBox="0 0 1 1"><circle cx="710" cy="359" r="5.5" fill="#fff"/><path d="M706.1 362.9 A5.5 5.5 0 0 1 713.9 355.1" fill="none" stroke="#808080"/><path d="M706.8 362.2 A4.5 4.5 0 0 1 713.2 355.8" fill="none" stroke="#404040"/><path d="M706.1 362.9 A5.5 5.5 0 0 0 713.9 355.1" fill="none" stroke="#FFFFFF"/><path d="M706.8 362.2 A4.5 4.5 0 0 0 713.2 355.8" fill="none" stroke="#D4D0C8"/><circle cx="710" cy="359" r="2" fill="#000"/></svg>
<div class="t" style="left:721px;top:354px;font-size:12px;color:#000;">AC</div>
<svg class="a" style="left:0px;top:0px;" width="1" height="1" viewBox="0 0 1 1"><circle cx="710" cy="375" r="5.5" fill="#fff"/><path d="M706.1 378.9 A5.5 5.5 0 0 1 713.9 371.1" fill="none" stroke="#808080"/><path d="M706.8 378.2 A4.5 4.5 0 0 1 713.2 371.8" fill="none" stroke="#404040"/><path d="M706.1 378.9 A5.5 5.5 0 0 0 713.9 371.1" fill="none" stroke="#FFFFFF"/><path d="M706.8 378.2 A4.5 4.5 0 0 0 713.2 371.8" fill="none" stroke="#D4D0C8"/></svg>
<div class="t" style="left:721px;top:370px;font-size:12px;color:#000;">GND</div>
<div class="a" style="left:607px;top:385px;width:65px;height:22px;box-shadow:inset 1px 1px #808080,inset -1px -1px #FFFFFF,inset 2px 2px #404040,inset -2px -2px #D4D0C8;background:#000"></div>
<div class="a" style="left:654px;top:387px;width:16px;height:19px;box-shadow:inset -1px -1px #404040,inset 1px 1px #D4D0C8,inset -2px -2px #808080,inset 2px 2px #FFFFFF;background:#D4D0C8"></div>
<svg class="a" style="left:658px;top:394px;" width="7" height="4" viewBox="0 0 7 4" shape-rendering="crispEdges"><path d="M0 0h7v1h-1v1h-1v1h-1v1h-1v-1h-1v-1h-1v-1h-1z" fill="#000"/></svg>
<div class="t" style="left:610px;top:390px;font-size:13px;color:#00FF00;">1V</div>
<div class="a" style="left:695px;top:385px;width:65px;height:22px;box-shadow:inset 1px 1px #808080,inset -1px -1px #FFFFFF,inset 2px 2px #404040,inset -2px -2px #D4D0C8;background:#000"></div>
<div class="a" style="left:742px;top:387px;width:16px;height:19px;box-shadow:inset -1px -1px #404040,inset 1px 1px #D4D0C8,inset -2px -2px #808080,inset 2px 2px #FFFFFF;background:#D4D0C8"></div>
<svg class="a" style="left:746px;top:394px;" width="7" height="4" viewBox="0 0 7 4" shape-rendering="crispEdges"><path d="M0 0h7v1h-1v1h-1v1h-1v1h-1v-1h-1v-1h-1v-1h-1z" fill="#000"/></svg>
<div class="t" style="left:698px;top:390px;font-size:13px;color:#FFFF00;">1V</div>
<svg class="a" style="left:0px;top:0px;" width="1" height="1" viewBox="0 0 1 1" shape-rendering="crispEdges"><circle cx="639.5" cy="441.5" r="29.5" fill="#000"/><circle cx="639.5" cy="441.5" r="28.5" fill="#F4F4F0"/><circle cx="639.5" cy="441.5" r="27.5" fill="#000"/><circle cx="639.5" cy="441.5" r="26.5" fill="#D0D0D0"/><path d="M657.57 422.12 A26.5 26.5 0 0 1 621.43 460.88 Z" fill="#808080"/><circle cx="639.5" cy="441.5" r="20.5" fill="#000"/><circle cx="639.5" cy="441.5" r="19.5" fill="#00E000"/><line x1="629.63" y1="437.91" x2="621.65" y2="435.00" stroke="#FFFFFF" stroke-width="2.2"/><line x1="621.12" y1="459.88" x2="613.34" y2="467.66" stroke="#000" stroke-width="1.6"/><line x1="657.88" y1="459.88" x2="665.66" y2="467.66" stroke="#000" stroke-width="1.6"/></svg>
<svg class="a" style="left:0px;top:0px;" width="1" height="1" viewBox="0 0 1 1" shape-rendering="crispEdges"><circle cx="727.5" cy="441.5" r="29.5" fill="#000"/><circle cx="727.5" cy="441.5" r="28.5" fill="#F4F4F0"/><circle cx="727.5" cy="441.5" r="27.5" fill="#000"/><circle cx="727.5" cy="441.5" r="26.5" fill="#D0D0D0"/><path d="M745.57 422.12 A26.5 26.5 0 0 1 709.43 460.88 Z" fill="#808080"/><circle cx="727.5" cy="441.5" r="20.5" fill="#000"/><circle cx="727.5" cy="441.5" r="19.5" fill="#E6D800"/><line x1="717.63" y1="437.91" x2="709.65" y2="435.00" stroke="#FFFFFF" stroke-width="2.2"/><line x1="709.12" y1="459.88" x2="701.34" y2="467.66" stroke="#000" stroke-width="1.6"/><line x1="745.88" y1="459.88" x2="753.66" y2="467.66" stroke="#000" stroke-width="1.6"/></svg>
<div class="a" style="left:607px;top:481px;width:65px;height:22px;box-shadow:inset 1px 1px #808080,inset -1px -1px #FFFFFF,inset 2px 2px #404040,inset -2px -2px #D4D0C8;background:#000"></div>
<div class="a" style="left:654px;top:483px;width:16px;height:19px;box-shadow:inset -1px -1px #404040,inset 1px 1px #D4D0C8,inset -2px -2px #808080,inset 2px 2px #FFFFFF;background:#D4D0C8"></div>
<svg class="a" style="left:658px;top:490px;" width="7" height="4" viewBox="0 0 7 4" shape-rendering="crispEdges"><path d="M0 0h7v1h-1v1h-1v1h-1v1h-1v-1h-1v-1h-1v-1h-1z" fill="#000"/></svg>
<div class="t" style="left:610px;top:486px;font-size:13px;color:#00FF00;">X1</div>
<div class="a" style="left:695px;top:481px;width:65px;height:22px;box-shadow:inset 1px 1px #808080,inset -1px -1px #FFFFFF,inset 2px 2px #404040,inset -2px -2px #D4D0C8;background:#000"></div>
<div class="a" style="left:742px;top:483px;width:16px;height:19px;box-shadow:inset -1px -1px #404040,inset 1px 1px #D4D0C8,inset -2px -2px #808080,inset 2px 2px #FFFFFF;background:#D4D0C8"></div>
<svg class="a" style="left:746px;top:490px;" width="7" height="4" viewBox="0 0 7 4" shape-rendering="crispEdges"><path d="M0 0h7v1h-1v1h-1v1h-1v1h-1v-1h-1v-1h-1v-1h-1z" fill="#000"/></svg>
<div class="t" style="left:698px;top:486px;font-size:13px;color:#FFFF00;">X1</div>
<div class="a" style="left:599px;top:528px;width:104px;height:66px;box-shadow:inset 1px 1px #808080,inset -1px -1px #FFFFFF,inset 2px 2px #FFFFFF,inset -2px -2px #808080"></div>
<div class="a" style="left:614px;top:521px;width:73px;height:12px;background:#D4D0C8"></div>
<div class="t" style="left:616px;top:522px;font-size:15px;color:#000;font-weight:bold;">TRIGGER</div>
<div class="t" style="left:601px;top:547px;font-size:12.3px;color:#000;">SOURCE</div>
<div class="a" style="left:652px;top:537px;width:48px;height:22px;box-shadow:inset 1px 1px #808080,inset -1px -1px #FFFFFF,inset 2px 2px #404040,inset -2px -2px #D4D0C8;background:#000"></div>
<div class="a" style="left:682px;top:539px;width:16px;height:19px;box-shadow:inset -1px -1px #404040,inset 1px 1px #D4D0C8,inset -2px -2px #808080,inset 2px 2px #FFFFFF;background:#D4D0C8"></div>
<svg class="a" style="left:686px;top:546px;" width="7" height="4" viewBox="0 0 7 4" shape-rendering="crispEdges"><path d="M0 0h7v1h-1v1h-1v1h-1v1h-1v-1h-1v-1h-1v-1h-1z" fill="#000"/></svg>
<div class="t" style="left:656px;top:542.5px;font-size:12.5px;color:#E8E8E8;">CH1</div>
<div class="t" style="left:601px;top:571px;font-size:12.3px;color:#000;">SLOPE</div>
<div class="a" style="left:652px;top:566px;width:48px;height:22px;box-shadow:inset 1px 1px #808080,inset -1px -1px #FFFFFF,inset 2px 2px #404040,inset -2px -2px #D4D0C8;background:#000"></div>
<div class="a" style="left:682px;top:568px;width:16px;height:19px;box-shadow:inset -1px -1px #404040,inset 1px 1px #D4D0C8,inset -2px -2px #808080,inset 2px 2px #FFFFFF;background:#D4D0C8"></div>
<svg class="a" style="left:686px;top:575px;" width="7" height="4" viewBox="0 0 7 4" shape-rendering="crispEdges"><path d="M0 0h7v1h-1v1h-1v1h-1v1h-1v-1h-1v-1h-1v-1h-1z" fill="#000"/></svg>
<div class="t" style="left:656px;top:571px;font-size:12.5px;color:#E8E8E8;">+</div>
<div class="a" style="left:711px;top:528px;width:57px;height:65px;box-shadow:inset -1px -1px #404040,inset 1px 1px #FFFFFF,inset -2px -2px #808080,inset 2px 2px #D4D0C8;background:#D4D0C8"></div>
<div class="t" style="left:721px;top:555px;font-size:13px;color:#000;font-weight:bold;">AUTO</div>
</body></html>
